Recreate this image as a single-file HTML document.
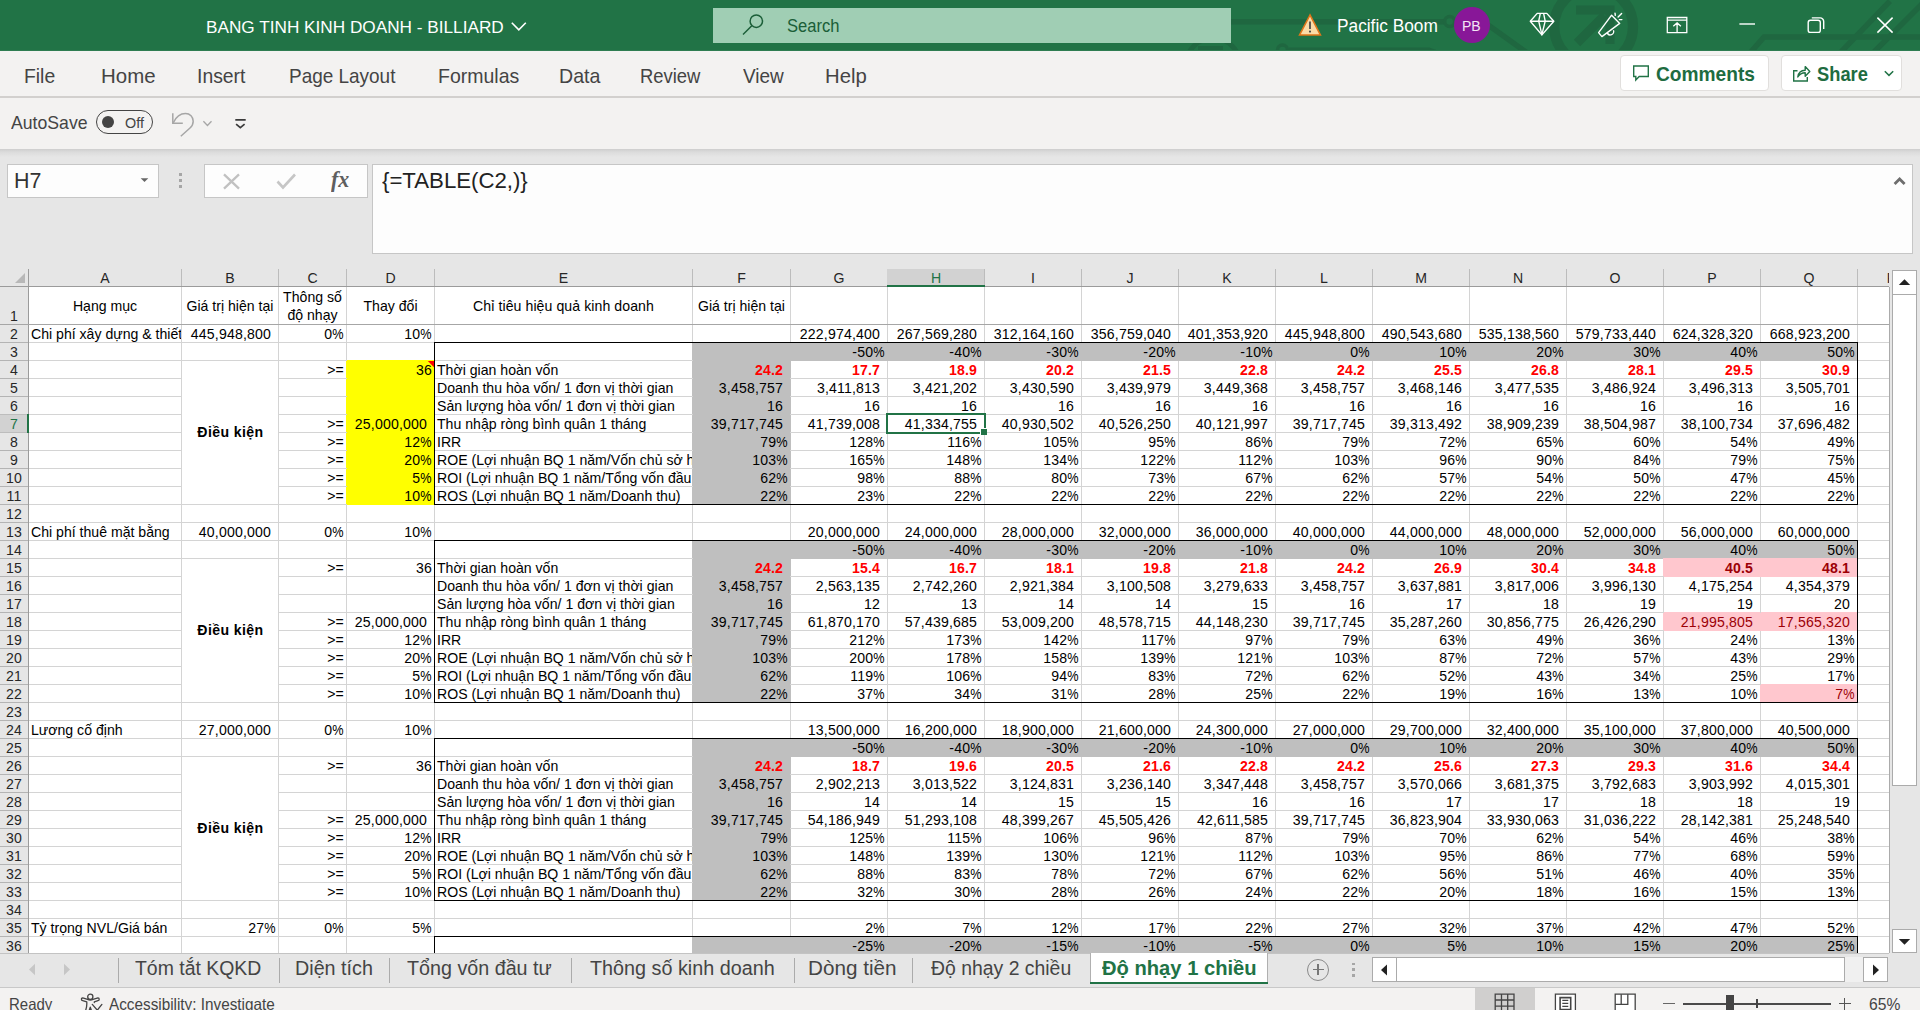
<!DOCTYPE html>
<html><head><meta charset="utf-8"><title>Excel</title>
<style>
*{box-sizing:border-box;margin:0;padding:0}
html,body{width:1920px;height:1010px;overflow:hidden;background:#e6e6e6;font-family:"Liberation Sans",sans-serif;}
#root{position:absolute;left:0;top:0;width:1920px;height:1010px;overflow:hidden;background:#e6e6e6}
.abs{position:absolute}
.t{position:absolute;white-space:nowrap;transform-origin:0 50%}
/* grid */
#grid{position:absolute;left:0;top:0;width:1889px;height:953px;overflow:hidden}
#sheet{position:absolute;left:29px;top:287px;width:1860px;height:666px;background:#fff}
.c{position:absolute;font-size:14.1px;color:#000;white-space:nowrap;overflow:hidden;}
.c.n{letter-spacing:.16px}
.c i{font-style:normal;display:inline-block;transform:scaleX(.9);transform-origin:100% 50%;margin-left:-1.2px;letter-spacing:0}
.c.b{font-weight:bold}
.c.rb{font-weight:bold;color:#ff0000}
.c.pk{color:#9c0006}
.ch{position:absolute;overflow:hidden;font-size:14.1px;color:#262626;text-align:center;background:#e6e6e6}
.ch.sel{background:#d2d2d2;color:#217346;}
.rh{position:absolute;overflow:hidden;letter-spacing:.16px;font-size:14.1px;color:#262626;text-align:center;background:#e6e6e6}
.rh.sel{background:#d2d2d2;color:#217346;}
</style></head><body><div id="root">
<div class="abs" style="left:0;top:0;width:1920px;height:50px;background:#217346;overflow:hidden">
<svg class="abs" style="left:0;top:0" width="1920" height="50" viewBox="0 0 1920 50" fill="none" stroke="#1f6740" stroke-width="5.500">
<circle cx="1593.600" cy="26.500" r="39.400" stroke-width="10.300"/>
<path d="M1576 9.900h34v34M1604.500 15.500L1577 43" stroke-width="9"/>
<path d="M1231 21.700h213M1455.500 24l34 2 42 30"/><circle cx="1449.700" cy="21.500" r="5" stroke-width="3.500"/>
<path d="M1289 49.500h140l14 5" stroke-width="4"/><circle cx="1282.500" cy="50" r="5" stroke-width="3.500"/>
<circle cx="1213" cy="65" r="27" stroke-width="5"/><path d="M1198 48.500h25" stroke-width="5"/>
<path d="M1744 60l20-23.100h160M1840 53l50-52M1870 56l56-56"/>
</svg>
<span class="t" style="left:206.08px;top:18.91px;font-size:17px;line-height:17px;color:#fff;transform:scaleX(1.0113);">BANG TINH KINH DOANH - BILLIARD</span>
<svg class="abs" style="left:510px;top:19.500px" width="18" height="12" viewBox="0 0 18 12" fill="none" stroke="#fff" stroke-width="1.600"><path d="M1.800 2.800l7 7 7-7"/></svg>
<div class="abs" style="left:713px;top:8px;width:518px;height:35px;background:#a0ceb4"></div>
<svg class="abs" style="left:741px;top:12px" width="26" height="26" viewBox="0 0 26 26" fill="none" stroke="#1b5e38" stroke-width="1.5"><circle cx="15.3" cy="9.2" r="6.2"/><path d="M10.8 13.8L2 22.5"/></svg>
<span class="t" style="left:786.75px;top:16.61px;font-size:18.3px;line-height:18.3px;color:#1b5e38;transform:scaleX(0.9072);">Search</span>
<svg class="abs" style="left:1297px;top:12px" width="26" height="25" viewBox="0 0 26 25"><path d="M13 3L2.6 23h20.8z" fill="#fbdba7" stroke="#e0761a" stroke-width="1.6" stroke-linejoin="miter"/><path d="M13 9.5v7.6" stroke="#444" stroke-width="1.7"/><circle cx="13" cy="19.6" r="1.05" fill="#444"/></svg>
<span class="t" style="left:1336.57px;top:17.26px;font-size:18px;line-height:18px;color:#fff;transform:scaleX(0.9602);">Pacific Boom</span>
<div class="abs" style="left:1454px;top:7px;width:36px;height:36px;border-radius:18px;background:#881798"></div>
<span class="t" style="left:1462.35px;top:18.73px;font-size:14.5px;line-height:14.5px;color:#f3e4f5;transform:scaleX(0.9655);">PB</span>
<svg class="abs" style="left:0;top:0" width="1920" height="50" viewBox="0 0 1920 50" fill="none" stroke="#fff" stroke-width="1.400" stroke-linejoin="round">
<path d="M1537.200 13.400h9.600l7 7.800-11.900 13.700-11.600-13.700z"/>
<path d="M1530.300 21.200h23.500M1540.300 13.400l-1.600 7.800 3.200 13.500 3.300-13.500-1.600-7.800"/>
<path d="M1611.600 15.200l8.100 8.200-17.800 13.200-3.300-4z"/>
<path d="M1607.200 32.900a3.100 3.100 0 0 0 6.200-2.700"/>
<path d="M1615 13.200l.3 2.200M1621.600 13.500l-3.500 3.500M1619.400 19.600h2.500" stroke-linecap="round"/>
<path d="M1667.300 17.500h19.500v15.200h-19.500zM1667.300 20.200h19.500M1677.100 32.500v-9.600M1673.300 26.300l3.800-3.400 3.800 3.400" stroke-width="1.300" stroke-linejoin="miter"/>
<path d="M1739.400 24h15.600" stroke-width="1.400"/>
<rect x="1808.200" y="20.200" width="12.100" height="12.200" rx="2.200"/>
<path d="M1811.800 17.900h8.400a3.500 3.500 0 0 1 3.500 3.500v7.600"/>
<path d="M1877.400 17.600l15.200 15M1892.600 17.600l-15.200 15" stroke-width="1.500"/>
</svg>
</div>
<div class="abs" style="left:0;top:50px;width:1920px;height:47px;background:#f3f2f1"></div>
<div class="abs" style="left:0;top:50px;width:1920px;height:1px;background:#2e7d52"></div>
<div class="abs" style="left:0;top:96px;width:1920px;height:1.500px;background:#d2d0ce"></div>
<span class="t" style="left:24.15px;top:65.53px;font-size:20.4px;line-height:20.4px;color:#444;transform:scaleX(0.9490);">File</span>
<span class="t" style="left:101.31px;top:65.53px;font-size:20.4px;line-height:20.4px;color:#444;transform:scaleX(1.0026);">Home</span>
<span class="t" style="left:197.21px;top:65.53px;font-size:20.4px;line-height:20.4px;color:#444;transform:scaleX(0.9498);">Insert</span>
<span class="t" style="left:289.19px;top:65.53px;font-size:20.4px;line-height:20.4px;color:#444;transform:scaleX(0.9294);">Page Layout</span>
<span class="t" style="left:438.39px;top:65.53px;font-size:20.4px;line-height:20.4px;color:#444;transform:scaleX(0.9562);">Formulas</span>
<span class="t" style="left:559.13px;top:65.53px;font-size:20.4px;line-height:20.4px;color:#444;transform:scaleX(0.9599);">Data</span>
<span class="t" style="left:640.48px;top:65.53px;font-size:20.4px;line-height:20.4px;color:#444;transform:scaleX(0.9038);">Review</span>
<span class="t" style="left:743.16px;top:65.53px;font-size:20.4px;line-height:20.4px;color:#444;transform:scaleX(0.9302);">View</span>
<span class="t" style="left:825.32px;top:65.53px;font-size:20.4px;line-height:20.4px;color:#444;transform:scaleX(0.9956);">Help</span>
<div class="abs" style="left:1620px;top:55px;width:149px;height:36px;background:#fff;border:1px solid #e1dfdd;border-radius:4px"></div>
<svg class="abs" style="left:1631px;top:63px" width="20" height="20" viewBox="0 0 20 20" fill="none" stroke="#217346" stroke-width="1.4" stroke-linejoin="miter"><path d="M2.700 3h14.600v10.500H8.200L4.800 17v-3.500H2.700z"/></svg>
<span class="t" style="left:1655.93px;top:64.75px;font-size:19.9px;line-height:19.9px;color:#1e6c41;font-weight:700;transform:scaleX(0.9630);">Comments</span>
<div class="abs" style="left:1781px;top:55px;width:121px;height:36px;background:#fff;border:1px solid #e1dfdd;border-radius:4px"></div>
<svg class="abs" style="left:1791px;top:63px" width="21" height="21" viewBox="0 0 21 21" fill="none" stroke="#217346" stroke-width="1.400"><path d="M6.500 7.700H2.700v10.300h13.600v-4"/><path d="M6.800 14c.6-4.300 3.200-6.600 7.400-6.700V3.600l4.600 4.800-4.600 4.800V9.700c-3.200 0-5.600 1.200-7.400 4.300z" stroke-linejoin="round"/></svg>
<span class="t" style="left:1816.95px;top:64.75px;font-size:19.9px;line-height:19.9px;color:#1e6c41;font-weight:700;transform:scaleX(0.9199);">Share</span>
<svg class="abs" style="left:1883px;top:69px" width="12" height="9" viewBox="0 0 12 9" fill="none" stroke="#217346" stroke-width="1.500"><path d="M1.800 2.200l4.200 4.200 4.200-4.200"/></svg>
<div class="abs" style="left:0;top:97.500px;width:1920px;height:51.500px;background:#f3f2f1"></div>
<div class="abs" style="left:0;top:149px;width:1920px;height:8px;background:linear-gradient(#cecece,#dcdcdc 40%,#e6e6e6)"></div>
<span class="t" style="left:11.21px;top:114.14px;font-size:18.2px;line-height:18.2px;color:#444;transform:scaleX(0.9702);">AutoSave</span>
<div class="abs" style="left:96px;top:110px;width:57px;height:24px;border:1.300px solid #444;border-radius:12px"></div>
<div class="abs" style="left:102.100px;top:116.100px;width:11.800px;height:11.800px;border-radius:6px;background:#444"></div>
<span class="t" style="left:124.82px;top:116.03px;font-size:14.5px;line-height:14.5px;color:#444;transform:scaleX(0.9910);">Off</span>
<svg class="abs" style="left:0;top:100px" width="260" height="45" viewBox="0 100 260 45" fill="none" stroke="#a6a6a6" stroke-width="1.500"><path d="M172.800 113.300V123.200H182.800"/><path d="M173.300 122.800C176 117 180.500 113.600 185.500 113.600C190 113.600 193.200 117 193.200 121.300C193.200 124 192 126.200 190 128L180.800 136.300"/><path d="M203.400 121.300l4.050 4.200 4.050-4.200" stroke-width="1.300"/><path d="M235.300 119.900h10.400M236.100 124.100l4.250 3.500 4.250-3.500" stroke="#3b3b3b" stroke-width="1.700"/></svg>
<div class="abs" style="left:7px;top:164px;width:152px;height:34px;background:#fdfdfd;border:1px solid #c6c6c6"></div>
<span class="t" style="left:13.73px;top:170.60px;font-size:21.5px;line-height:21.5px;color:#333;transform:scaleX(0.9952);">H7</span>
<svg class="abs" style="left:140px;top:177px" width="9" height="6" viewBox="0 0 9 6"><path d="M.7 1.200h7.600L4.500 5z" fill="#666"/></svg>
<div class="abs" style="left:179px;top:173.2px;width:3px;height:2.700px;background:#a6a6a6"></div>
<div class="abs" style="left:179px;top:179.3px;width:3px;height:2.700px;background:#a6a6a6"></div>
<div class="abs" style="left:179px;top:185.3px;width:3px;height:2.700px;background:#a6a6a6"></div>
<div class="abs" style="left:204px;top:164px;width:164px;height:34px;background:#fdfdfd;border:1px solid #c6c6c6"></div>
<svg class="abs" style="left:221px;top:172px" width="21" height="19" viewBox="0 0 21 19" fill="none" stroke="#c1c1c1" stroke-width="2.300"><path d="M3 2.300l15 14.400M18 2.300L3 16.700"/></svg>
<svg class="abs" style="left:275px;top:172px" width="23" height="19" viewBox="0 0 23 19" fill="none" stroke="#c6c6c6" stroke-width="2.600"><path d="M2.500 9.500l5.500 6L20 2.500"/></svg>
<span class="t" style="left:330.50px;top:168.12px;font-size:23.5px;line-height:23.5px;color:#5f5f5f;font-weight:700;font-family:'Liberation Serif',serif;font-style:italic;transform:scaleX(0.9354);">fx</span>
<div class="abs" style="left:372px;top:164px;width:1541px;height:90px;background:#fdfdfd;border:1px solid #c6c6c6"></div>
<span class="t" style="left:382.11px;top:171.04px;font-size:21.33px;line-height:21.33px;color:#222;transform:scaleX(1.0406);">{=TABLE(C2,)}</span>
<svg class="abs" style="left:1893px;top:176px" width="13" height="10" viewBox="0 0 13 10" fill="none" stroke="#6e6e6e" stroke-width="2.800"><path d="M1.600 8l5-5 5 5"/></svg>
<div id="grid">
<div id="sheet"></div>
<div style="position:absolute;left:692px;top:342px;width:99px;height:163px;background:#bfbfbf;"></div>
<div style="position:absolute;left:790px;top:342px;width:1068px;height:19px;background:#bfbfbf;"></div>
<div style="position:absolute;left:346px;top:360px;width:89px;height:145px;background:#ffff00;"></div>
<div style="position:absolute;left:692px;top:540px;width:99px;height:163px;background:#bfbfbf;"></div>
<div style="position:absolute;left:790px;top:540px;width:1068px;height:19px;background:#bfbfbf;"></div>
<div style="position:absolute;left:1663px;top:558px;width:98px;height:19px;background:#ffc7ce;"></div>
<div style="position:absolute;left:1760px;top:558px;width:98px;height:19px;background:#ffc7ce;"></div>
<div style="position:absolute;left:1663px;top:612px;width:98px;height:19px;background:#ffc7ce;"></div>
<div style="position:absolute;left:1760px;top:612px;width:98px;height:19px;background:#ffc7ce;"></div>
<div style="position:absolute;left:1760px;top:684px;width:98px;height:19px;background:#ffc7ce;"></div>
<div style="position:absolute;left:692px;top:738px;width:99px;height:163px;background:#bfbfbf;"></div>
<div style="position:absolute;left:790px;top:738px;width:1068px;height:19px;background:#bfbfbf;"></div>
<div style="position:absolute;left:692px;top:936px;width:99px;height:17px;background:#bfbfbf;"></div>
<div style="position:absolute;left:790px;top:936px;width:1068px;height:17px;background:#bfbfbf;"></div>
<div style="position:absolute;left:28px;top:342px;width:665px;height:1px;background:#d4d4d4"></div>
<div style="position:absolute;left:1857px;top:342px;width:32px;height:1px;background:#d4d4d4"></div>
<div style="position:absolute;left:28px;top:360px;width:319px;height:1px;background:#d4d4d4"></div>
<div style="position:absolute;left:434px;top:360px;width:259px;height:1px;background:#d4d4d4"></div>
<div style="position:absolute;left:1857px;top:360px;width:32px;height:1px;background:#d4d4d4"></div>
<div style="position:absolute;left:28px;top:378px;width:154px;height:1px;background:#d4d4d4"></div>
<div style="position:absolute;left:278px;top:378px;width:69px;height:1px;background:#d4d4d4"></div>
<div style="position:absolute;left:434px;top:378px;width:259px;height:1px;background:#d4d4d4"></div>
<div style="position:absolute;left:790px;top:378px;width:1099px;height:1px;background:#d4d4d4"></div>
<div style="position:absolute;left:28px;top:396px;width:154px;height:1px;background:#d4d4d4"></div>
<div style="position:absolute;left:278px;top:396px;width:69px;height:1px;background:#d4d4d4"></div>
<div style="position:absolute;left:434px;top:396px;width:259px;height:1px;background:#d4d4d4"></div>
<div style="position:absolute;left:790px;top:396px;width:1099px;height:1px;background:#d4d4d4"></div>
<div style="position:absolute;left:28px;top:414px;width:154px;height:1px;background:#d4d4d4"></div>
<div style="position:absolute;left:278px;top:414px;width:69px;height:1px;background:#d4d4d4"></div>
<div style="position:absolute;left:434px;top:414px;width:259px;height:1px;background:#d4d4d4"></div>
<div style="position:absolute;left:790px;top:414px;width:1099px;height:1px;background:#d4d4d4"></div>
<div style="position:absolute;left:28px;top:432px;width:154px;height:1px;background:#d4d4d4"></div>
<div style="position:absolute;left:278px;top:432px;width:69px;height:1px;background:#d4d4d4"></div>
<div style="position:absolute;left:434px;top:432px;width:259px;height:1px;background:#d4d4d4"></div>
<div style="position:absolute;left:790px;top:432px;width:1099px;height:1px;background:#d4d4d4"></div>
<div style="position:absolute;left:28px;top:450px;width:154px;height:1px;background:#d4d4d4"></div>
<div style="position:absolute;left:278px;top:450px;width:69px;height:1px;background:#d4d4d4"></div>
<div style="position:absolute;left:434px;top:450px;width:259px;height:1px;background:#d4d4d4"></div>
<div style="position:absolute;left:790px;top:450px;width:1099px;height:1px;background:#d4d4d4"></div>
<div style="position:absolute;left:28px;top:468px;width:154px;height:1px;background:#d4d4d4"></div>
<div style="position:absolute;left:278px;top:468px;width:69px;height:1px;background:#d4d4d4"></div>
<div style="position:absolute;left:434px;top:468px;width:259px;height:1px;background:#d4d4d4"></div>
<div style="position:absolute;left:790px;top:468px;width:1099px;height:1px;background:#d4d4d4"></div>
<div style="position:absolute;left:28px;top:486px;width:154px;height:1px;background:#d4d4d4"></div>
<div style="position:absolute;left:278px;top:486px;width:69px;height:1px;background:#d4d4d4"></div>
<div style="position:absolute;left:434px;top:486px;width:259px;height:1px;background:#d4d4d4"></div>
<div style="position:absolute;left:790px;top:486px;width:1099px;height:1px;background:#d4d4d4"></div>
<div style="position:absolute;left:28px;top:504px;width:319px;height:1px;background:#d4d4d4"></div>
<div style="position:absolute;left:434px;top:504px;width:259px;height:1px;background:#d4d4d4"></div>
<div style="position:absolute;left:790px;top:504px;width:1099px;height:1px;background:#d4d4d4"></div>
<div style="position:absolute;left:28px;top:522px;width:1861px;height:1px;background:#d4d4d4"></div>
<div style="position:absolute;left:28px;top:540px;width:665px;height:1px;background:#d4d4d4"></div>
<div style="position:absolute;left:1857px;top:540px;width:32px;height:1px;background:#d4d4d4"></div>
<div style="position:absolute;left:28px;top:558px;width:665px;height:1px;background:#d4d4d4"></div>
<div style="position:absolute;left:1857px;top:558px;width:32px;height:1px;background:#d4d4d4"></div>
<div style="position:absolute;left:28px;top:576px;width:154px;height:1px;background:#d4d4d4"></div>
<div style="position:absolute;left:278px;top:576px;width:415px;height:1px;background:#d4d4d4"></div>
<div style="position:absolute;left:790px;top:576px;width:874px;height:1px;background:#d4d4d4"></div>
<div style="position:absolute;left:1857px;top:576px;width:32px;height:1px;background:#d4d4d4"></div>
<div style="position:absolute;left:28px;top:594px;width:154px;height:1px;background:#d4d4d4"></div>
<div style="position:absolute;left:278px;top:594px;width:415px;height:1px;background:#d4d4d4"></div>
<div style="position:absolute;left:790px;top:594px;width:1099px;height:1px;background:#d4d4d4"></div>
<div style="position:absolute;left:28px;top:612px;width:154px;height:1px;background:#d4d4d4"></div>
<div style="position:absolute;left:278px;top:612px;width:415px;height:1px;background:#d4d4d4"></div>
<div style="position:absolute;left:790px;top:612px;width:874px;height:1px;background:#d4d4d4"></div>
<div style="position:absolute;left:1857px;top:612px;width:32px;height:1px;background:#d4d4d4"></div>
<div style="position:absolute;left:28px;top:630px;width:154px;height:1px;background:#d4d4d4"></div>
<div style="position:absolute;left:278px;top:630px;width:415px;height:1px;background:#d4d4d4"></div>
<div style="position:absolute;left:790px;top:630px;width:874px;height:1px;background:#d4d4d4"></div>
<div style="position:absolute;left:1857px;top:630px;width:32px;height:1px;background:#d4d4d4"></div>
<div style="position:absolute;left:28px;top:648px;width:154px;height:1px;background:#d4d4d4"></div>
<div style="position:absolute;left:278px;top:648px;width:415px;height:1px;background:#d4d4d4"></div>
<div style="position:absolute;left:790px;top:648px;width:1099px;height:1px;background:#d4d4d4"></div>
<div style="position:absolute;left:28px;top:666px;width:154px;height:1px;background:#d4d4d4"></div>
<div style="position:absolute;left:278px;top:666px;width:415px;height:1px;background:#d4d4d4"></div>
<div style="position:absolute;left:790px;top:666px;width:1099px;height:1px;background:#d4d4d4"></div>
<div style="position:absolute;left:28px;top:684px;width:154px;height:1px;background:#d4d4d4"></div>
<div style="position:absolute;left:278px;top:684px;width:415px;height:1px;background:#d4d4d4"></div>
<div style="position:absolute;left:790px;top:684px;width:971px;height:1px;background:#d4d4d4"></div>
<div style="position:absolute;left:1857px;top:684px;width:32px;height:1px;background:#d4d4d4"></div>
<div style="position:absolute;left:28px;top:702px;width:665px;height:1px;background:#d4d4d4"></div>
<div style="position:absolute;left:790px;top:702px;width:971px;height:1px;background:#d4d4d4"></div>
<div style="position:absolute;left:1857px;top:702px;width:32px;height:1px;background:#d4d4d4"></div>
<div style="position:absolute;left:28px;top:720px;width:1861px;height:1px;background:#d4d4d4"></div>
<div style="position:absolute;left:28px;top:738px;width:665px;height:1px;background:#d4d4d4"></div>
<div style="position:absolute;left:1857px;top:738px;width:32px;height:1px;background:#d4d4d4"></div>
<div style="position:absolute;left:28px;top:756px;width:665px;height:1px;background:#d4d4d4"></div>
<div style="position:absolute;left:1857px;top:756px;width:32px;height:1px;background:#d4d4d4"></div>
<div style="position:absolute;left:28px;top:774px;width:154px;height:1px;background:#d4d4d4"></div>
<div style="position:absolute;left:278px;top:774px;width:415px;height:1px;background:#d4d4d4"></div>
<div style="position:absolute;left:790px;top:774px;width:1099px;height:1px;background:#d4d4d4"></div>
<div style="position:absolute;left:28px;top:792px;width:154px;height:1px;background:#d4d4d4"></div>
<div style="position:absolute;left:278px;top:792px;width:415px;height:1px;background:#d4d4d4"></div>
<div style="position:absolute;left:790px;top:792px;width:1099px;height:1px;background:#d4d4d4"></div>
<div style="position:absolute;left:28px;top:810px;width:154px;height:1px;background:#d4d4d4"></div>
<div style="position:absolute;left:278px;top:810px;width:415px;height:1px;background:#d4d4d4"></div>
<div style="position:absolute;left:790px;top:810px;width:1099px;height:1px;background:#d4d4d4"></div>
<div style="position:absolute;left:28px;top:828px;width:154px;height:1px;background:#d4d4d4"></div>
<div style="position:absolute;left:278px;top:828px;width:415px;height:1px;background:#d4d4d4"></div>
<div style="position:absolute;left:790px;top:828px;width:1099px;height:1px;background:#d4d4d4"></div>
<div style="position:absolute;left:28px;top:846px;width:154px;height:1px;background:#d4d4d4"></div>
<div style="position:absolute;left:278px;top:846px;width:415px;height:1px;background:#d4d4d4"></div>
<div style="position:absolute;left:790px;top:846px;width:1099px;height:1px;background:#d4d4d4"></div>
<div style="position:absolute;left:28px;top:864px;width:154px;height:1px;background:#d4d4d4"></div>
<div style="position:absolute;left:278px;top:864px;width:415px;height:1px;background:#d4d4d4"></div>
<div style="position:absolute;left:790px;top:864px;width:1099px;height:1px;background:#d4d4d4"></div>
<div style="position:absolute;left:28px;top:882px;width:154px;height:1px;background:#d4d4d4"></div>
<div style="position:absolute;left:278px;top:882px;width:415px;height:1px;background:#d4d4d4"></div>
<div style="position:absolute;left:790px;top:882px;width:1099px;height:1px;background:#d4d4d4"></div>
<div style="position:absolute;left:28px;top:900px;width:665px;height:1px;background:#d4d4d4"></div>
<div style="position:absolute;left:790px;top:900px;width:1099px;height:1px;background:#d4d4d4"></div>
<div style="position:absolute;left:28px;top:918px;width:1861px;height:1px;background:#d4d4d4"></div>
<div style="position:absolute;left:28px;top:936px;width:665px;height:1px;background:#d4d4d4"></div>
<div style="position:absolute;left:1857px;top:936px;width:32px;height:1px;background:#d4d4d4"></div>
<div style="position:absolute;left:181px;top:287px;width:1px;height:37px;background:#d4d4d4"></div>
<div style="position:absolute;left:181px;top:325px;width:1px;height:18px;background:#d4d4d4"></div>
<div style="position:absolute;left:181px;top:343px;width:1px;height:18px;background:#d4d4d4"></div>
<div style="position:absolute;left:181px;top:361px;width:1px;height:18px;background:#d4d4d4"></div>
<div style="position:absolute;left:181px;top:379px;width:1px;height:18px;background:#d4d4d4"></div>
<div style="position:absolute;left:181px;top:397px;width:1px;height:18px;background:#d4d4d4"></div>
<div style="position:absolute;left:181px;top:415px;width:1px;height:18px;background:#d4d4d4"></div>
<div style="position:absolute;left:181px;top:433px;width:1px;height:18px;background:#d4d4d4"></div>
<div style="position:absolute;left:181px;top:451px;width:1px;height:18px;background:#d4d4d4"></div>
<div style="position:absolute;left:181px;top:469px;width:1px;height:18px;background:#d4d4d4"></div>
<div style="position:absolute;left:181px;top:487px;width:1px;height:18px;background:#d4d4d4"></div>
<div style="position:absolute;left:181px;top:505px;width:1px;height:18px;background:#d4d4d4"></div>
<div style="position:absolute;left:181px;top:523px;width:1px;height:18px;background:#d4d4d4"></div>
<div style="position:absolute;left:181px;top:541px;width:1px;height:18px;background:#d4d4d4"></div>
<div style="position:absolute;left:181px;top:559px;width:1px;height:18px;background:#d4d4d4"></div>
<div style="position:absolute;left:181px;top:577px;width:1px;height:18px;background:#d4d4d4"></div>
<div style="position:absolute;left:181px;top:595px;width:1px;height:18px;background:#d4d4d4"></div>
<div style="position:absolute;left:181px;top:613px;width:1px;height:18px;background:#d4d4d4"></div>
<div style="position:absolute;left:181px;top:631px;width:1px;height:18px;background:#d4d4d4"></div>
<div style="position:absolute;left:181px;top:649px;width:1px;height:18px;background:#d4d4d4"></div>
<div style="position:absolute;left:181px;top:667px;width:1px;height:18px;background:#d4d4d4"></div>
<div style="position:absolute;left:181px;top:685px;width:1px;height:18px;background:#d4d4d4"></div>
<div style="position:absolute;left:181px;top:703px;width:1px;height:18px;background:#d4d4d4"></div>
<div style="position:absolute;left:181px;top:721px;width:1px;height:18px;background:#d4d4d4"></div>
<div style="position:absolute;left:181px;top:739px;width:1px;height:18px;background:#d4d4d4"></div>
<div style="position:absolute;left:181px;top:757px;width:1px;height:18px;background:#d4d4d4"></div>
<div style="position:absolute;left:181px;top:775px;width:1px;height:18px;background:#d4d4d4"></div>
<div style="position:absolute;left:181px;top:793px;width:1px;height:18px;background:#d4d4d4"></div>
<div style="position:absolute;left:181px;top:811px;width:1px;height:18px;background:#d4d4d4"></div>
<div style="position:absolute;left:181px;top:829px;width:1px;height:18px;background:#d4d4d4"></div>
<div style="position:absolute;left:181px;top:847px;width:1px;height:18px;background:#d4d4d4"></div>
<div style="position:absolute;left:181px;top:865px;width:1px;height:18px;background:#d4d4d4"></div>
<div style="position:absolute;left:181px;top:883px;width:1px;height:18px;background:#d4d4d4"></div>
<div style="position:absolute;left:181px;top:901px;width:1px;height:18px;background:#d4d4d4"></div>
<div style="position:absolute;left:181px;top:919px;width:1px;height:18px;background:#d4d4d4"></div>
<div style="position:absolute;left:181px;top:937px;width:1px;height:16px;background:#d4d4d4"></div>
<div style="position:absolute;left:278px;top:287px;width:1px;height:37px;background:#d4d4d4"></div>
<div style="position:absolute;left:278px;top:325px;width:1px;height:18px;background:#d4d4d4"></div>
<div style="position:absolute;left:278px;top:343px;width:1px;height:18px;background:#d4d4d4"></div>
<div style="position:absolute;left:278px;top:361px;width:1px;height:18px;background:#d4d4d4"></div>
<div style="position:absolute;left:278px;top:379px;width:1px;height:18px;background:#d4d4d4"></div>
<div style="position:absolute;left:278px;top:397px;width:1px;height:18px;background:#d4d4d4"></div>
<div style="position:absolute;left:278px;top:415px;width:1px;height:18px;background:#d4d4d4"></div>
<div style="position:absolute;left:278px;top:433px;width:1px;height:18px;background:#d4d4d4"></div>
<div style="position:absolute;left:278px;top:451px;width:1px;height:18px;background:#d4d4d4"></div>
<div style="position:absolute;left:278px;top:469px;width:1px;height:18px;background:#d4d4d4"></div>
<div style="position:absolute;left:278px;top:487px;width:1px;height:18px;background:#d4d4d4"></div>
<div style="position:absolute;left:278px;top:505px;width:1px;height:18px;background:#d4d4d4"></div>
<div style="position:absolute;left:278px;top:523px;width:1px;height:18px;background:#d4d4d4"></div>
<div style="position:absolute;left:278px;top:541px;width:1px;height:18px;background:#d4d4d4"></div>
<div style="position:absolute;left:278px;top:559px;width:1px;height:18px;background:#d4d4d4"></div>
<div style="position:absolute;left:278px;top:577px;width:1px;height:18px;background:#d4d4d4"></div>
<div style="position:absolute;left:278px;top:595px;width:1px;height:18px;background:#d4d4d4"></div>
<div style="position:absolute;left:278px;top:613px;width:1px;height:18px;background:#d4d4d4"></div>
<div style="position:absolute;left:278px;top:631px;width:1px;height:18px;background:#d4d4d4"></div>
<div style="position:absolute;left:278px;top:649px;width:1px;height:18px;background:#d4d4d4"></div>
<div style="position:absolute;left:278px;top:667px;width:1px;height:18px;background:#d4d4d4"></div>
<div style="position:absolute;left:278px;top:685px;width:1px;height:18px;background:#d4d4d4"></div>
<div style="position:absolute;left:278px;top:703px;width:1px;height:18px;background:#d4d4d4"></div>
<div style="position:absolute;left:278px;top:721px;width:1px;height:18px;background:#d4d4d4"></div>
<div style="position:absolute;left:278px;top:739px;width:1px;height:18px;background:#d4d4d4"></div>
<div style="position:absolute;left:278px;top:757px;width:1px;height:18px;background:#d4d4d4"></div>
<div style="position:absolute;left:278px;top:775px;width:1px;height:18px;background:#d4d4d4"></div>
<div style="position:absolute;left:278px;top:793px;width:1px;height:18px;background:#d4d4d4"></div>
<div style="position:absolute;left:278px;top:811px;width:1px;height:18px;background:#d4d4d4"></div>
<div style="position:absolute;left:278px;top:829px;width:1px;height:18px;background:#d4d4d4"></div>
<div style="position:absolute;left:278px;top:847px;width:1px;height:18px;background:#d4d4d4"></div>
<div style="position:absolute;left:278px;top:865px;width:1px;height:18px;background:#d4d4d4"></div>
<div style="position:absolute;left:278px;top:883px;width:1px;height:18px;background:#d4d4d4"></div>
<div style="position:absolute;left:278px;top:901px;width:1px;height:18px;background:#d4d4d4"></div>
<div style="position:absolute;left:278px;top:919px;width:1px;height:18px;background:#d4d4d4"></div>
<div style="position:absolute;left:278px;top:937px;width:1px;height:16px;background:#d4d4d4"></div>
<div style="position:absolute;left:346px;top:287px;width:1px;height:37px;background:#d4d4d4"></div>
<div style="position:absolute;left:346px;top:325px;width:1px;height:18px;background:#d4d4d4"></div>
<div style="position:absolute;left:346px;top:343px;width:1px;height:18px;background:#d4d4d4"></div>
<div style="position:absolute;left:346px;top:505px;width:1px;height:18px;background:#d4d4d4"></div>
<div style="position:absolute;left:346px;top:523px;width:1px;height:18px;background:#d4d4d4"></div>
<div style="position:absolute;left:346px;top:541px;width:1px;height:18px;background:#d4d4d4"></div>
<div style="position:absolute;left:346px;top:559px;width:1px;height:18px;background:#d4d4d4"></div>
<div style="position:absolute;left:346px;top:577px;width:1px;height:18px;background:#d4d4d4"></div>
<div style="position:absolute;left:346px;top:595px;width:1px;height:18px;background:#d4d4d4"></div>
<div style="position:absolute;left:346px;top:613px;width:1px;height:18px;background:#d4d4d4"></div>
<div style="position:absolute;left:346px;top:631px;width:1px;height:18px;background:#d4d4d4"></div>
<div style="position:absolute;left:346px;top:649px;width:1px;height:18px;background:#d4d4d4"></div>
<div style="position:absolute;left:346px;top:667px;width:1px;height:18px;background:#d4d4d4"></div>
<div style="position:absolute;left:346px;top:685px;width:1px;height:18px;background:#d4d4d4"></div>
<div style="position:absolute;left:346px;top:703px;width:1px;height:18px;background:#d4d4d4"></div>
<div style="position:absolute;left:346px;top:721px;width:1px;height:18px;background:#d4d4d4"></div>
<div style="position:absolute;left:346px;top:739px;width:1px;height:18px;background:#d4d4d4"></div>
<div style="position:absolute;left:346px;top:757px;width:1px;height:18px;background:#d4d4d4"></div>
<div style="position:absolute;left:346px;top:775px;width:1px;height:18px;background:#d4d4d4"></div>
<div style="position:absolute;left:346px;top:793px;width:1px;height:18px;background:#d4d4d4"></div>
<div style="position:absolute;left:346px;top:811px;width:1px;height:18px;background:#d4d4d4"></div>
<div style="position:absolute;left:346px;top:829px;width:1px;height:18px;background:#d4d4d4"></div>
<div style="position:absolute;left:346px;top:847px;width:1px;height:18px;background:#d4d4d4"></div>
<div style="position:absolute;left:346px;top:865px;width:1px;height:18px;background:#d4d4d4"></div>
<div style="position:absolute;left:346px;top:883px;width:1px;height:18px;background:#d4d4d4"></div>
<div style="position:absolute;left:346px;top:901px;width:1px;height:18px;background:#d4d4d4"></div>
<div style="position:absolute;left:346px;top:919px;width:1px;height:18px;background:#d4d4d4"></div>
<div style="position:absolute;left:346px;top:937px;width:1px;height:16px;background:#d4d4d4"></div>
<div style="position:absolute;left:434px;top:287px;width:1px;height:37px;background:#d4d4d4"></div>
<div style="position:absolute;left:434px;top:325px;width:1px;height:18px;background:#d4d4d4"></div>
<div style="position:absolute;left:434px;top:343px;width:1px;height:18px;background:#d4d4d4"></div>
<div style="position:absolute;left:434px;top:505px;width:1px;height:18px;background:#d4d4d4"></div>
<div style="position:absolute;left:434px;top:523px;width:1px;height:18px;background:#d4d4d4"></div>
<div style="position:absolute;left:434px;top:541px;width:1px;height:18px;background:#d4d4d4"></div>
<div style="position:absolute;left:434px;top:559px;width:1px;height:18px;background:#d4d4d4"></div>
<div style="position:absolute;left:434px;top:577px;width:1px;height:18px;background:#d4d4d4"></div>
<div style="position:absolute;left:434px;top:595px;width:1px;height:18px;background:#d4d4d4"></div>
<div style="position:absolute;left:434px;top:613px;width:1px;height:18px;background:#d4d4d4"></div>
<div style="position:absolute;left:434px;top:631px;width:1px;height:18px;background:#d4d4d4"></div>
<div style="position:absolute;left:434px;top:649px;width:1px;height:18px;background:#d4d4d4"></div>
<div style="position:absolute;left:434px;top:667px;width:1px;height:18px;background:#d4d4d4"></div>
<div style="position:absolute;left:434px;top:685px;width:1px;height:18px;background:#d4d4d4"></div>
<div style="position:absolute;left:434px;top:703px;width:1px;height:18px;background:#d4d4d4"></div>
<div style="position:absolute;left:434px;top:721px;width:1px;height:18px;background:#d4d4d4"></div>
<div style="position:absolute;left:434px;top:739px;width:1px;height:18px;background:#d4d4d4"></div>
<div style="position:absolute;left:434px;top:757px;width:1px;height:18px;background:#d4d4d4"></div>
<div style="position:absolute;left:434px;top:775px;width:1px;height:18px;background:#d4d4d4"></div>
<div style="position:absolute;left:434px;top:793px;width:1px;height:18px;background:#d4d4d4"></div>
<div style="position:absolute;left:434px;top:811px;width:1px;height:18px;background:#d4d4d4"></div>
<div style="position:absolute;left:434px;top:829px;width:1px;height:18px;background:#d4d4d4"></div>
<div style="position:absolute;left:434px;top:847px;width:1px;height:18px;background:#d4d4d4"></div>
<div style="position:absolute;left:434px;top:865px;width:1px;height:18px;background:#d4d4d4"></div>
<div style="position:absolute;left:434px;top:883px;width:1px;height:18px;background:#d4d4d4"></div>
<div style="position:absolute;left:434px;top:901px;width:1px;height:18px;background:#d4d4d4"></div>
<div style="position:absolute;left:434px;top:919px;width:1px;height:18px;background:#d4d4d4"></div>
<div style="position:absolute;left:434px;top:937px;width:1px;height:16px;background:#d4d4d4"></div>
<div style="position:absolute;left:692px;top:287px;width:1px;height:37px;background:#d4d4d4"></div>
<div style="position:absolute;left:692px;top:325px;width:1px;height:18px;background:#d4d4d4"></div>
<div style="position:absolute;left:692px;top:505px;width:1px;height:18px;background:#d4d4d4"></div>
<div style="position:absolute;left:692px;top:523px;width:1px;height:18px;background:#d4d4d4"></div>
<div style="position:absolute;left:692px;top:703px;width:1px;height:18px;background:#d4d4d4"></div>
<div style="position:absolute;left:692px;top:721px;width:1px;height:18px;background:#d4d4d4"></div>
<div style="position:absolute;left:692px;top:901px;width:1px;height:18px;background:#d4d4d4"></div>
<div style="position:absolute;left:692px;top:919px;width:1px;height:18px;background:#d4d4d4"></div>
<div style="position:absolute;left:790px;top:287px;width:1px;height:37px;background:#d4d4d4"></div>
<div style="position:absolute;left:790px;top:325px;width:1px;height:18px;background:#d4d4d4"></div>
<div style="position:absolute;left:790px;top:505px;width:1px;height:18px;background:#d4d4d4"></div>
<div style="position:absolute;left:790px;top:523px;width:1px;height:18px;background:#d4d4d4"></div>
<div style="position:absolute;left:790px;top:703px;width:1px;height:18px;background:#d4d4d4"></div>
<div style="position:absolute;left:790px;top:721px;width:1px;height:18px;background:#d4d4d4"></div>
<div style="position:absolute;left:790px;top:901px;width:1px;height:18px;background:#d4d4d4"></div>
<div style="position:absolute;left:790px;top:919px;width:1px;height:18px;background:#d4d4d4"></div>
<div style="position:absolute;left:887px;top:287px;width:1px;height:37px;background:#d4d4d4"></div>
<div style="position:absolute;left:887px;top:325px;width:1px;height:18px;background:#d4d4d4"></div>
<div style="position:absolute;left:887px;top:361px;width:1px;height:18px;background:#d4d4d4"></div>
<div style="position:absolute;left:887px;top:379px;width:1px;height:18px;background:#d4d4d4"></div>
<div style="position:absolute;left:887px;top:397px;width:1px;height:18px;background:#d4d4d4"></div>
<div style="position:absolute;left:887px;top:415px;width:1px;height:18px;background:#d4d4d4"></div>
<div style="position:absolute;left:887px;top:433px;width:1px;height:18px;background:#d4d4d4"></div>
<div style="position:absolute;left:887px;top:451px;width:1px;height:18px;background:#d4d4d4"></div>
<div style="position:absolute;left:887px;top:469px;width:1px;height:18px;background:#d4d4d4"></div>
<div style="position:absolute;left:887px;top:487px;width:1px;height:18px;background:#d4d4d4"></div>
<div style="position:absolute;left:887px;top:505px;width:1px;height:18px;background:#d4d4d4"></div>
<div style="position:absolute;left:887px;top:523px;width:1px;height:18px;background:#d4d4d4"></div>
<div style="position:absolute;left:887px;top:559px;width:1px;height:18px;background:#d4d4d4"></div>
<div style="position:absolute;left:887px;top:577px;width:1px;height:18px;background:#d4d4d4"></div>
<div style="position:absolute;left:887px;top:595px;width:1px;height:18px;background:#d4d4d4"></div>
<div style="position:absolute;left:887px;top:613px;width:1px;height:18px;background:#d4d4d4"></div>
<div style="position:absolute;left:887px;top:631px;width:1px;height:18px;background:#d4d4d4"></div>
<div style="position:absolute;left:887px;top:649px;width:1px;height:18px;background:#d4d4d4"></div>
<div style="position:absolute;left:887px;top:667px;width:1px;height:18px;background:#d4d4d4"></div>
<div style="position:absolute;left:887px;top:685px;width:1px;height:18px;background:#d4d4d4"></div>
<div style="position:absolute;left:887px;top:703px;width:1px;height:18px;background:#d4d4d4"></div>
<div style="position:absolute;left:887px;top:721px;width:1px;height:18px;background:#d4d4d4"></div>
<div style="position:absolute;left:887px;top:757px;width:1px;height:18px;background:#d4d4d4"></div>
<div style="position:absolute;left:887px;top:775px;width:1px;height:18px;background:#d4d4d4"></div>
<div style="position:absolute;left:887px;top:793px;width:1px;height:18px;background:#d4d4d4"></div>
<div style="position:absolute;left:887px;top:811px;width:1px;height:18px;background:#d4d4d4"></div>
<div style="position:absolute;left:887px;top:829px;width:1px;height:18px;background:#d4d4d4"></div>
<div style="position:absolute;left:887px;top:847px;width:1px;height:18px;background:#d4d4d4"></div>
<div style="position:absolute;left:887px;top:865px;width:1px;height:18px;background:#d4d4d4"></div>
<div style="position:absolute;left:887px;top:883px;width:1px;height:18px;background:#d4d4d4"></div>
<div style="position:absolute;left:887px;top:901px;width:1px;height:18px;background:#d4d4d4"></div>
<div style="position:absolute;left:887px;top:919px;width:1px;height:18px;background:#d4d4d4"></div>
<div style="position:absolute;left:984px;top:287px;width:1px;height:37px;background:#d4d4d4"></div>
<div style="position:absolute;left:984px;top:325px;width:1px;height:18px;background:#d4d4d4"></div>
<div style="position:absolute;left:984px;top:361px;width:1px;height:18px;background:#d4d4d4"></div>
<div style="position:absolute;left:984px;top:379px;width:1px;height:18px;background:#d4d4d4"></div>
<div style="position:absolute;left:984px;top:397px;width:1px;height:18px;background:#d4d4d4"></div>
<div style="position:absolute;left:984px;top:415px;width:1px;height:18px;background:#d4d4d4"></div>
<div style="position:absolute;left:984px;top:433px;width:1px;height:18px;background:#d4d4d4"></div>
<div style="position:absolute;left:984px;top:451px;width:1px;height:18px;background:#d4d4d4"></div>
<div style="position:absolute;left:984px;top:469px;width:1px;height:18px;background:#d4d4d4"></div>
<div style="position:absolute;left:984px;top:487px;width:1px;height:18px;background:#d4d4d4"></div>
<div style="position:absolute;left:984px;top:505px;width:1px;height:18px;background:#d4d4d4"></div>
<div style="position:absolute;left:984px;top:523px;width:1px;height:18px;background:#d4d4d4"></div>
<div style="position:absolute;left:984px;top:559px;width:1px;height:18px;background:#d4d4d4"></div>
<div style="position:absolute;left:984px;top:577px;width:1px;height:18px;background:#d4d4d4"></div>
<div style="position:absolute;left:984px;top:595px;width:1px;height:18px;background:#d4d4d4"></div>
<div style="position:absolute;left:984px;top:613px;width:1px;height:18px;background:#d4d4d4"></div>
<div style="position:absolute;left:984px;top:631px;width:1px;height:18px;background:#d4d4d4"></div>
<div style="position:absolute;left:984px;top:649px;width:1px;height:18px;background:#d4d4d4"></div>
<div style="position:absolute;left:984px;top:667px;width:1px;height:18px;background:#d4d4d4"></div>
<div style="position:absolute;left:984px;top:685px;width:1px;height:18px;background:#d4d4d4"></div>
<div style="position:absolute;left:984px;top:703px;width:1px;height:18px;background:#d4d4d4"></div>
<div style="position:absolute;left:984px;top:721px;width:1px;height:18px;background:#d4d4d4"></div>
<div style="position:absolute;left:984px;top:757px;width:1px;height:18px;background:#d4d4d4"></div>
<div style="position:absolute;left:984px;top:775px;width:1px;height:18px;background:#d4d4d4"></div>
<div style="position:absolute;left:984px;top:793px;width:1px;height:18px;background:#d4d4d4"></div>
<div style="position:absolute;left:984px;top:811px;width:1px;height:18px;background:#d4d4d4"></div>
<div style="position:absolute;left:984px;top:829px;width:1px;height:18px;background:#d4d4d4"></div>
<div style="position:absolute;left:984px;top:847px;width:1px;height:18px;background:#d4d4d4"></div>
<div style="position:absolute;left:984px;top:865px;width:1px;height:18px;background:#d4d4d4"></div>
<div style="position:absolute;left:984px;top:883px;width:1px;height:18px;background:#d4d4d4"></div>
<div style="position:absolute;left:984px;top:901px;width:1px;height:18px;background:#d4d4d4"></div>
<div style="position:absolute;left:984px;top:919px;width:1px;height:18px;background:#d4d4d4"></div>
<div style="position:absolute;left:1081px;top:287px;width:1px;height:37px;background:#d4d4d4"></div>
<div style="position:absolute;left:1081px;top:325px;width:1px;height:18px;background:#d4d4d4"></div>
<div style="position:absolute;left:1081px;top:361px;width:1px;height:18px;background:#d4d4d4"></div>
<div style="position:absolute;left:1081px;top:379px;width:1px;height:18px;background:#d4d4d4"></div>
<div style="position:absolute;left:1081px;top:397px;width:1px;height:18px;background:#d4d4d4"></div>
<div style="position:absolute;left:1081px;top:415px;width:1px;height:18px;background:#d4d4d4"></div>
<div style="position:absolute;left:1081px;top:433px;width:1px;height:18px;background:#d4d4d4"></div>
<div style="position:absolute;left:1081px;top:451px;width:1px;height:18px;background:#d4d4d4"></div>
<div style="position:absolute;left:1081px;top:469px;width:1px;height:18px;background:#d4d4d4"></div>
<div style="position:absolute;left:1081px;top:487px;width:1px;height:18px;background:#d4d4d4"></div>
<div style="position:absolute;left:1081px;top:505px;width:1px;height:18px;background:#d4d4d4"></div>
<div style="position:absolute;left:1081px;top:523px;width:1px;height:18px;background:#d4d4d4"></div>
<div style="position:absolute;left:1081px;top:559px;width:1px;height:18px;background:#d4d4d4"></div>
<div style="position:absolute;left:1081px;top:577px;width:1px;height:18px;background:#d4d4d4"></div>
<div style="position:absolute;left:1081px;top:595px;width:1px;height:18px;background:#d4d4d4"></div>
<div style="position:absolute;left:1081px;top:613px;width:1px;height:18px;background:#d4d4d4"></div>
<div style="position:absolute;left:1081px;top:631px;width:1px;height:18px;background:#d4d4d4"></div>
<div style="position:absolute;left:1081px;top:649px;width:1px;height:18px;background:#d4d4d4"></div>
<div style="position:absolute;left:1081px;top:667px;width:1px;height:18px;background:#d4d4d4"></div>
<div style="position:absolute;left:1081px;top:685px;width:1px;height:18px;background:#d4d4d4"></div>
<div style="position:absolute;left:1081px;top:703px;width:1px;height:18px;background:#d4d4d4"></div>
<div style="position:absolute;left:1081px;top:721px;width:1px;height:18px;background:#d4d4d4"></div>
<div style="position:absolute;left:1081px;top:757px;width:1px;height:18px;background:#d4d4d4"></div>
<div style="position:absolute;left:1081px;top:775px;width:1px;height:18px;background:#d4d4d4"></div>
<div style="position:absolute;left:1081px;top:793px;width:1px;height:18px;background:#d4d4d4"></div>
<div style="position:absolute;left:1081px;top:811px;width:1px;height:18px;background:#d4d4d4"></div>
<div style="position:absolute;left:1081px;top:829px;width:1px;height:18px;background:#d4d4d4"></div>
<div style="position:absolute;left:1081px;top:847px;width:1px;height:18px;background:#d4d4d4"></div>
<div style="position:absolute;left:1081px;top:865px;width:1px;height:18px;background:#d4d4d4"></div>
<div style="position:absolute;left:1081px;top:883px;width:1px;height:18px;background:#d4d4d4"></div>
<div style="position:absolute;left:1081px;top:901px;width:1px;height:18px;background:#d4d4d4"></div>
<div style="position:absolute;left:1081px;top:919px;width:1px;height:18px;background:#d4d4d4"></div>
<div style="position:absolute;left:1178px;top:287px;width:1px;height:37px;background:#d4d4d4"></div>
<div style="position:absolute;left:1178px;top:325px;width:1px;height:18px;background:#d4d4d4"></div>
<div style="position:absolute;left:1178px;top:361px;width:1px;height:18px;background:#d4d4d4"></div>
<div style="position:absolute;left:1178px;top:379px;width:1px;height:18px;background:#d4d4d4"></div>
<div style="position:absolute;left:1178px;top:397px;width:1px;height:18px;background:#d4d4d4"></div>
<div style="position:absolute;left:1178px;top:415px;width:1px;height:18px;background:#d4d4d4"></div>
<div style="position:absolute;left:1178px;top:433px;width:1px;height:18px;background:#d4d4d4"></div>
<div style="position:absolute;left:1178px;top:451px;width:1px;height:18px;background:#d4d4d4"></div>
<div style="position:absolute;left:1178px;top:469px;width:1px;height:18px;background:#d4d4d4"></div>
<div style="position:absolute;left:1178px;top:487px;width:1px;height:18px;background:#d4d4d4"></div>
<div style="position:absolute;left:1178px;top:505px;width:1px;height:18px;background:#d4d4d4"></div>
<div style="position:absolute;left:1178px;top:523px;width:1px;height:18px;background:#d4d4d4"></div>
<div style="position:absolute;left:1178px;top:559px;width:1px;height:18px;background:#d4d4d4"></div>
<div style="position:absolute;left:1178px;top:577px;width:1px;height:18px;background:#d4d4d4"></div>
<div style="position:absolute;left:1178px;top:595px;width:1px;height:18px;background:#d4d4d4"></div>
<div style="position:absolute;left:1178px;top:613px;width:1px;height:18px;background:#d4d4d4"></div>
<div style="position:absolute;left:1178px;top:631px;width:1px;height:18px;background:#d4d4d4"></div>
<div style="position:absolute;left:1178px;top:649px;width:1px;height:18px;background:#d4d4d4"></div>
<div style="position:absolute;left:1178px;top:667px;width:1px;height:18px;background:#d4d4d4"></div>
<div style="position:absolute;left:1178px;top:685px;width:1px;height:18px;background:#d4d4d4"></div>
<div style="position:absolute;left:1178px;top:703px;width:1px;height:18px;background:#d4d4d4"></div>
<div style="position:absolute;left:1178px;top:721px;width:1px;height:18px;background:#d4d4d4"></div>
<div style="position:absolute;left:1178px;top:757px;width:1px;height:18px;background:#d4d4d4"></div>
<div style="position:absolute;left:1178px;top:775px;width:1px;height:18px;background:#d4d4d4"></div>
<div style="position:absolute;left:1178px;top:793px;width:1px;height:18px;background:#d4d4d4"></div>
<div style="position:absolute;left:1178px;top:811px;width:1px;height:18px;background:#d4d4d4"></div>
<div style="position:absolute;left:1178px;top:829px;width:1px;height:18px;background:#d4d4d4"></div>
<div style="position:absolute;left:1178px;top:847px;width:1px;height:18px;background:#d4d4d4"></div>
<div style="position:absolute;left:1178px;top:865px;width:1px;height:18px;background:#d4d4d4"></div>
<div style="position:absolute;left:1178px;top:883px;width:1px;height:18px;background:#d4d4d4"></div>
<div style="position:absolute;left:1178px;top:901px;width:1px;height:18px;background:#d4d4d4"></div>
<div style="position:absolute;left:1178px;top:919px;width:1px;height:18px;background:#d4d4d4"></div>
<div style="position:absolute;left:1275px;top:287px;width:1px;height:37px;background:#d4d4d4"></div>
<div style="position:absolute;left:1275px;top:325px;width:1px;height:18px;background:#d4d4d4"></div>
<div style="position:absolute;left:1275px;top:361px;width:1px;height:18px;background:#d4d4d4"></div>
<div style="position:absolute;left:1275px;top:379px;width:1px;height:18px;background:#d4d4d4"></div>
<div style="position:absolute;left:1275px;top:397px;width:1px;height:18px;background:#d4d4d4"></div>
<div style="position:absolute;left:1275px;top:415px;width:1px;height:18px;background:#d4d4d4"></div>
<div style="position:absolute;left:1275px;top:433px;width:1px;height:18px;background:#d4d4d4"></div>
<div style="position:absolute;left:1275px;top:451px;width:1px;height:18px;background:#d4d4d4"></div>
<div style="position:absolute;left:1275px;top:469px;width:1px;height:18px;background:#d4d4d4"></div>
<div style="position:absolute;left:1275px;top:487px;width:1px;height:18px;background:#d4d4d4"></div>
<div style="position:absolute;left:1275px;top:505px;width:1px;height:18px;background:#d4d4d4"></div>
<div style="position:absolute;left:1275px;top:523px;width:1px;height:18px;background:#d4d4d4"></div>
<div style="position:absolute;left:1275px;top:559px;width:1px;height:18px;background:#d4d4d4"></div>
<div style="position:absolute;left:1275px;top:577px;width:1px;height:18px;background:#d4d4d4"></div>
<div style="position:absolute;left:1275px;top:595px;width:1px;height:18px;background:#d4d4d4"></div>
<div style="position:absolute;left:1275px;top:613px;width:1px;height:18px;background:#d4d4d4"></div>
<div style="position:absolute;left:1275px;top:631px;width:1px;height:18px;background:#d4d4d4"></div>
<div style="position:absolute;left:1275px;top:649px;width:1px;height:18px;background:#d4d4d4"></div>
<div style="position:absolute;left:1275px;top:667px;width:1px;height:18px;background:#d4d4d4"></div>
<div style="position:absolute;left:1275px;top:685px;width:1px;height:18px;background:#d4d4d4"></div>
<div style="position:absolute;left:1275px;top:703px;width:1px;height:18px;background:#d4d4d4"></div>
<div style="position:absolute;left:1275px;top:721px;width:1px;height:18px;background:#d4d4d4"></div>
<div style="position:absolute;left:1275px;top:757px;width:1px;height:18px;background:#d4d4d4"></div>
<div style="position:absolute;left:1275px;top:775px;width:1px;height:18px;background:#d4d4d4"></div>
<div style="position:absolute;left:1275px;top:793px;width:1px;height:18px;background:#d4d4d4"></div>
<div style="position:absolute;left:1275px;top:811px;width:1px;height:18px;background:#d4d4d4"></div>
<div style="position:absolute;left:1275px;top:829px;width:1px;height:18px;background:#d4d4d4"></div>
<div style="position:absolute;left:1275px;top:847px;width:1px;height:18px;background:#d4d4d4"></div>
<div style="position:absolute;left:1275px;top:865px;width:1px;height:18px;background:#d4d4d4"></div>
<div style="position:absolute;left:1275px;top:883px;width:1px;height:18px;background:#d4d4d4"></div>
<div style="position:absolute;left:1275px;top:901px;width:1px;height:18px;background:#d4d4d4"></div>
<div style="position:absolute;left:1275px;top:919px;width:1px;height:18px;background:#d4d4d4"></div>
<div style="position:absolute;left:1372px;top:287px;width:1px;height:37px;background:#d4d4d4"></div>
<div style="position:absolute;left:1372px;top:325px;width:1px;height:18px;background:#d4d4d4"></div>
<div style="position:absolute;left:1372px;top:361px;width:1px;height:18px;background:#d4d4d4"></div>
<div style="position:absolute;left:1372px;top:379px;width:1px;height:18px;background:#d4d4d4"></div>
<div style="position:absolute;left:1372px;top:397px;width:1px;height:18px;background:#d4d4d4"></div>
<div style="position:absolute;left:1372px;top:415px;width:1px;height:18px;background:#d4d4d4"></div>
<div style="position:absolute;left:1372px;top:433px;width:1px;height:18px;background:#d4d4d4"></div>
<div style="position:absolute;left:1372px;top:451px;width:1px;height:18px;background:#d4d4d4"></div>
<div style="position:absolute;left:1372px;top:469px;width:1px;height:18px;background:#d4d4d4"></div>
<div style="position:absolute;left:1372px;top:487px;width:1px;height:18px;background:#d4d4d4"></div>
<div style="position:absolute;left:1372px;top:505px;width:1px;height:18px;background:#d4d4d4"></div>
<div style="position:absolute;left:1372px;top:523px;width:1px;height:18px;background:#d4d4d4"></div>
<div style="position:absolute;left:1372px;top:559px;width:1px;height:18px;background:#d4d4d4"></div>
<div style="position:absolute;left:1372px;top:577px;width:1px;height:18px;background:#d4d4d4"></div>
<div style="position:absolute;left:1372px;top:595px;width:1px;height:18px;background:#d4d4d4"></div>
<div style="position:absolute;left:1372px;top:613px;width:1px;height:18px;background:#d4d4d4"></div>
<div style="position:absolute;left:1372px;top:631px;width:1px;height:18px;background:#d4d4d4"></div>
<div style="position:absolute;left:1372px;top:649px;width:1px;height:18px;background:#d4d4d4"></div>
<div style="position:absolute;left:1372px;top:667px;width:1px;height:18px;background:#d4d4d4"></div>
<div style="position:absolute;left:1372px;top:685px;width:1px;height:18px;background:#d4d4d4"></div>
<div style="position:absolute;left:1372px;top:703px;width:1px;height:18px;background:#d4d4d4"></div>
<div style="position:absolute;left:1372px;top:721px;width:1px;height:18px;background:#d4d4d4"></div>
<div style="position:absolute;left:1372px;top:757px;width:1px;height:18px;background:#d4d4d4"></div>
<div style="position:absolute;left:1372px;top:775px;width:1px;height:18px;background:#d4d4d4"></div>
<div style="position:absolute;left:1372px;top:793px;width:1px;height:18px;background:#d4d4d4"></div>
<div style="position:absolute;left:1372px;top:811px;width:1px;height:18px;background:#d4d4d4"></div>
<div style="position:absolute;left:1372px;top:829px;width:1px;height:18px;background:#d4d4d4"></div>
<div style="position:absolute;left:1372px;top:847px;width:1px;height:18px;background:#d4d4d4"></div>
<div style="position:absolute;left:1372px;top:865px;width:1px;height:18px;background:#d4d4d4"></div>
<div style="position:absolute;left:1372px;top:883px;width:1px;height:18px;background:#d4d4d4"></div>
<div style="position:absolute;left:1372px;top:901px;width:1px;height:18px;background:#d4d4d4"></div>
<div style="position:absolute;left:1372px;top:919px;width:1px;height:18px;background:#d4d4d4"></div>
<div style="position:absolute;left:1469px;top:287px;width:1px;height:37px;background:#d4d4d4"></div>
<div style="position:absolute;left:1469px;top:325px;width:1px;height:18px;background:#d4d4d4"></div>
<div style="position:absolute;left:1469px;top:361px;width:1px;height:18px;background:#d4d4d4"></div>
<div style="position:absolute;left:1469px;top:379px;width:1px;height:18px;background:#d4d4d4"></div>
<div style="position:absolute;left:1469px;top:397px;width:1px;height:18px;background:#d4d4d4"></div>
<div style="position:absolute;left:1469px;top:415px;width:1px;height:18px;background:#d4d4d4"></div>
<div style="position:absolute;left:1469px;top:433px;width:1px;height:18px;background:#d4d4d4"></div>
<div style="position:absolute;left:1469px;top:451px;width:1px;height:18px;background:#d4d4d4"></div>
<div style="position:absolute;left:1469px;top:469px;width:1px;height:18px;background:#d4d4d4"></div>
<div style="position:absolute;left:1469px;top:487px;width:1px;height:18px;background:#d4d4d4"></div>
<div style="position:absolute;left:1469px;top:505px;width:1px;height:18px;background:#d4d4d4"></div>
<div style="position:absolute;left:1469px;top:523px;width:1px;height:18px;background:#d4d4d4"></div>
<div style="position:absolute;left:1469px;top:559px;width:1px;height:18px;background:#d4d4d4"></div>
<div style="position:absolute;left:1469px;top:577px;width:1px;height:18px;background:#d4d4d4"></div>
<div style="position:absolute;left:1469px;top:595px;width:1px;height:18px;background:#d4d4d4"></div>
<div style="position:absolute;left:1469px;top:613px;width:1px;height:18px;background:#d4d4d4"></div>
<div style="position:absolute;left:1469px;top:631px;width:1px;height:18px;background:#d4d4d4"></div>
<div style="position:absolute;left:1469px;top:649px;width:1px;height:18px;background:#d4d4d4"></div>
<div style="position:absolute;left:1469px;top:667px;width:1px;height:18px;background:#d4d4d4"></div>
<div style="position:absolute;left:1469px;top:685px;width:1px;height:18px;background:#d4d4d4"></div>
<div style="position:absolute;left:1469px;top:703px;width:1px;height:18px;background:#d4d4d4"></div>
<div style="position:absolute;left:1469px;top:721px;width:1px;height:18px;background:#d4d4d4"></div>
<div style="position:absolute;left:1469px;top:757px;width:1px;height:18px;background:#d4d4d4"></div>
<div style="position:absolute;left:1469px;top:775px;width:1px;height:18px;background:#d4d4d4"></div>
<div style="position:absolute;left:1469px;top:793px;width:1px;height:18px;background:#d4d4d4"></div>
<div style="position:absolute;left:1469px;top:811px;width:1px;height:18px;background:#d4d4d4"></div>
<div style="position:absolute;left:1469px;top:829px;width:1px;height:18px;background:#d4d4d4"></div>
<div style="position:absolute;left:1469px;top:847px;width:1px;height:18px;background:#d4d4d4"></div>
<div style="position:absolute;left:1469px;top:865px;width:1px;height:18px;background:#d4d4d4"></div>
<div style="position:absolute;left:1469px;top:883px;width:1px;height:18px;background:#d4d4d4"></div>
<div style="position:absolute;left:1469px;top:901px;width:1px;height:18px;background:#d4d4d4"></div>
<div style="position:absolute;left:1469px;top:919px;width:1px;height:18px;background:#d4d4d4"></div>
<div style="position:absolute;left:1566px;top:287px;width:1px;height:37px;background:#d4d4d4"></div>
<div style="position:absolute;left:1566px;top:325px;width:1px;height:18px;background:#d4d4d4"></div>
<div style="position:absolute;left:1566px;top:361px;width:1px;height:18px;background:#d4d4d4"></div>
<div style="position:absolute;left:1566px;top:379px;width:1px;height:18px;background:#d4d4d4"></div>
<div style="position:absolute;left:1566px;top:397px;width:1px;height:18px;background:#d4d4d4"></div>
<div style="position:absolute;left:1566px;top:415px;width:1px;height:18px;background:#d4d4d4"></div>
<div style="position:absolute;left:1566px;top:433px;width:1px;height:18px;background:#d4d4d4"></div>
<div style="position:absolute;left:1566px;top:451px;width:1px;height:18px;background:#d4d4d4"></div>
<div style="position:absolute;left:1566px;top:469px;width:1px;height:18px;background:#d4d4d4"></div>
<div style="position:absolute;left:1566px;top:487px;width:1px;height:18px;background:#d4d4d4"></div>
<div style="position:absolute;left:1566px;top:505px;width:1px;height:18px;background:#d4d4d4"></div>
<div style="position:absolute;left:1566px;top:523px;width:1px;height:18px;background:#d4d4d4"></div>
<div style="position:absolute;left:1566px;top:559px;width:1px;height:18px;background:#d4d4d4"></div>
<div style="position:absolute;left:1566px;top:577px;width:1px;height:18px;background:#d4d4d4"></div>
<div style="position:absolute;left:1566px;top:595px;width:1px;height:18px;background:#d4d4d4"></div>
<div style="position:absolute;left:1566px;top:613px;width:1px;height:18px;background:#d4d4d4"></div>
<div style="position:absolute;left:1566px;top:631px;width:1px;height:18px;background:#d4d4d4"></div>
<div style="position:absolute;left:1566px;top:649px;width:1px;height:18px;background:#d4d4d4"></div>
<div style="position:absolute;left:1566px;top:667px;width:1px;height:18px;background:#d4d4d4"></div>
<div style="position:absolute;left:1566px;top:685px;width:1px;height:18px;background:#d4d4d4"></div>
<div style="position:absolute;left:1566px;top:703px;width:1px;height:18px;background:#d4d4d4"></div>
<div style="position:absolute;left:1566px;top:721px;width:1px;height:18px;background:#d4d4d4"></div>
<div style="position:absolute;left:1566px;top:757px;width:1px;height:18px;background:#d4d4d4"></div>
<div style="position:absolute;left:1566px;top:775px;width:1px;height:18px;background:#d4d4d4"></div>
<div style="position:absolute;left:1566px;top:793px;width:1px;height:18px;background:#d4d4d4"></div>
<div style="position:absolute;left:1566px;top:811px;width:1px;height:18px;background:#d4d4d4"></div>
<div style="position:absolute;left:1566px;top:829px;width:1px;height:18px;background:#d4d4d4"></div>
<div style="position:absolute;left:1566px;top:847px;width:1px;height:18px;background:#d4d4d4"></div>
<div style="position:absolute;left:1566px;top:865px;width:1px;height:18px;background:#d4d4d4"></div>
<div style="position:absolute;left:1566px;top:883px;width:1px;height:18px;background:#d4d4d4"></div>
<div style="position:absolute;left:1566px;top:901px;width:1px;height:18px;background:#d4d4d4"></div>
<div style="position:absolute;left:1566px;top:919px;width:1px;height:18px;background:#d4d4d4"></div>
<div style="position:absolute;left:1663px;top:287px;width:1px;height:37px;background:#d4d4d4"></div>
<div style="position:absolute;left:1663px;top:325px;width:1px;height:18px;background:#d4d4d4"></div>
<div style="position:absolute;left:1663px;top:361px;width:1px;height:18px;background:#d4d4d4"></div>
<div style="position:absolute;left:1663px;top:379px;width:1px;height:18px;background:#d4d4d4"></div>
<div style="position:absolute;left:1663px;top:397px;width:1px;height:18px;background:#d4d4d4"></div>
<div style="position:absolute;left:1663px;top:415px;width:1px;height:18px;background:#d4d4d4"></div>
<div style="position:absolute;left:1663px;top:433px;width:1px;height:18px;background:#d4d4d4"></div>
<div style="position:absolute;left:1663px;top:451px;width:1px;height:18px;background:#d4d4d4"></div>
<div style="position:absolute;left:1663px;top:469px;width:1px;height:18px;background:#d4d4d4"></div>
<div style="position:absolute;left:1663px;top:487px;width:1px;height:18px;background:#d4d4d4"></div>
<div style="position:absolute;left:1663px;top:505px;width:1px;height:18px;background:#d4d4d4"></div>
<div style="position:absolute;left:1663px;top:523px;width:1px;height:18px;background:#d4d4d4"></div>
<div style="position:absolute;left:1663px;top:577px;width:1px;height:18px;background:#d4d4d4"></div>
<div style="position:absolute;left:1663px;top:595px;width:1px;height:18px;background:#d4d4d4"></div>
<div style="position:absolute;left:1663px;top:631px;width:1px;height:18px;background:#d4d4d4"></div>
<div style="position:absolute;left:1663px;top:649px;width:1px;height:18px;background:#d4d4d4"></div>
<div style="position:absolute;left:1663px;top:667px;width:1px;height:18px;background:#d4d4d4"></div>
<div style="position:absolute;left:1663px;top:685px;width:1px;height:18px;background:#d4d4d4"></div>
<div style="position:absolute;left:1663px;top:703px;width:1px;height:18px;background:#d4d4d4"></div>
<div style="position:absolute;left:1663px;top:721px;width:1px;height:18px;background:#d4d4d4"></div>
<div style="position:absolute;left:1663px;top:757px;width:1px;height:18px;background:#d4d4d4"></div>
<div style="position:absolute;left:1663px;top:775px;width:1px;height:18px;background:#d4d4d4"></div>
<div style="position:absolute;left:1663px;top:793px;width:1px;height:18px;background:#d4d4d4"></div>
<div style="position:absolute;left:1663px;top:811px;width:1px;height:18px;background:#d4d4d4"></div>
<div style="position:absolute;left:1663px;top:829px;width:1px;height:18px;background:#d4d4d4"></div>
<div style="position:absolute;left:1663px;top:847px;width:1px;height:18px;background:#d4d4d4"></div>
<div style="position:absolute;left:1663px;top:865px;width:1px;height:18px;background:#d4d4d4"></div>
<div style="position:absolute;left:1663px;top:883px;width:1px;height:18px;background:#d4d4d4"></div>
<div style="position:absolute;left:1663px;top:901px;width:1px;height:18px;background:#d4d4d4"></div>
<div style="position:absolute;left:1663px;top:919px;width:1px;height:18px;background:#d4d4d4"></div>
<div style="position:absolute;left:1760px;top:287px;width:1px;height:37px;background:#d4d4d4"></div>
<div style="position:absolute;left:1760px;top:325px;width:1px;height:18px;background:#d4d4d4"></div>
<div style="position:absolute;left:1760px;top:361px;width:1px;height:18px;background:#d4d4d4"></div>
<div style="position:absolute;left:1760px;top:379px;width:1px;height:18px;background:#d4d4d4"></div>
<div style="position:absolute;left:1760px;top:397px;width:1px;height:18px;background:#d4d4d4"></div>
<div style="position:absolute;left:1760px;top:415px;width:1px;height:18px;background:#d4d4d4"></div>
<div style="position:absolute;left:1760px;top:433px;width:1px;height:18px;background:#d4d4d4"></div>
<div style="position:absolute;left:1760px;top:451px;width:1px;height:18px;background:#d4d4d4"></div>
<div style="position:absolute;left:1760px;top:469px;width:1px;height:18px;background:#d4d4d4"></div>
<div style="position:absolute;left:1760px;top:487px;width:1px;height:18px;background:#d4d4d4"></div>
<div style="position:absolute;left:1760px;top:505px;width:1px;height:18px;background:#d4d4d4"></div>
<div style="position:absolute;left:1760px;top:523px;width:1px;height:18px;background:#d4d4d4"></div>
<div style="position:absolute;left:1760px;top:577px;width:1px;height:18px;background:#d4d4d4"></div>
<div style="position:absolute;left:1760px;top:595px;width:1px;height:18px;background:#d4d4d4"></div>
<div style="position:absolute;left:1760px;top:631px;width:1px;height:18px;background:#d4d4d4"></div>
<div style="position:absolute;left:1760px;top:649px;width:1px;height:18px;background:#d4d4d4"></div>
<div style="position:absolute;left:1760px;top:667px;width:1px;height:18px;background:#d4d4d4"></div>
<div style="position:absolute;left:1760px;top:703px;width:1px;height:18px;background:#d4d4d4"></div>
<div style="position:absolute;left:1760px;top:721px;width:1px;height:18px;background:#d4d4d4"></div>
<div style="position:absolute;left:1760px;top:757px;width:1px;height:18px;background:#d4d4d4"></div>
<div style="position:absolute;left:1760px;top:775px;width:1px;height:18px;background:#d4d4d4"></div>
<div style="position:absolute;left:1760px;top:793px;width:1px;height:18px;background:#d4d4d4"></div>
<div style="position:absolute;left:1760px;top:811px;width:1px;height:18px;background:#d4d4d4"></div>
<div style="position:absolute;left:1760px;top:829px;width:1px;height:18px;background:#d4d4d4"></div>
<div style="position:absolute;left:1760px;top:847px;width:1px;height:18px;background:#d4d4d4"></div>
<div style="position:absolute;left:1760px;top:865px;width:1px;height:18px;background:#d4d4d4"></div>
<div style="position:absolute;left:1760px;top:883px;width:1px;height:18px;background:#d4d4d4"></div>
<div style="position:absolute;left:1760px;top:901px;width:1px;height:18px;background:#d4d4d4"></div>
<div style="position:absolute;left:1760px;top:919px;width:1px;height:18px;background:#d4d4d4"></div>
<div style="position:absolute;left:1857px;top:287px;width:1px;height:37px;background:#d4d4d4"></div>
<div style="position:absolute;left:1857px;top:325px;width:1px;height:18px;background:#d4d4d4"></div>
<div style="position:absolute;left:1857px;top:361px;width:1px;height:18px;background:#d4d4d4"></div>
<div style="position:absolute;left:1857px;top:379px;width:1px;height:18px;background:#d4d4d4"></div>
<div style="position:absolute;left:1857px;top:397px;width:1px;height:18px;background:#d4d4d4"></div>
<div style="position:absolute;left:1857px;top:415px;width:1px;height:18px;background:#d4d4d4"></div>
<div style="position:absolute;left:1857px;top:433px;width:1px;height:18px;background:#d4d4d4"></div>
<div style="position:absolute;left:1857px;top:451px;width:1px;height:18px;background:#d4d4d4"></div>
<div style="position:absolute;left:1857px;top:469px;width:1px;height:18px;background:#d4d4d4"></div>
<div style="position:absolute;left:1857px;top:487px;width:1px;height:18px;background:#d4d4d4"></div>
<div style="position:absolute;left:1857px;top:505px;width:1px;height:18px;background:#d4d4d4"></div>
<div style="position:absolute;left:1857px;top:523px;width:1px;height:18px;background:#d4d4d4"></div>
<div style="position:absolute;left:1857px;top:577px;width:1px;height:18px;background:#d4d4d4"></div>
<div style="position:absolute;left:1857px;top:595px;width:1px;height:18px;background:#d4d4d4"></div>
<div style="position:absolute;left:1857px;top:631px;width:1px;height:18px;background:#d4d4d4"></div>
<div style="position:absolute;left:1857px;top:649px;width:1px;height:18px;background:#d4d4d4"></div>
<div style="position:absolute;left:1857px;top:667px;width:1px;height:18px;background:#d4d4d4"></div>
<div style="position:absolute;left:1857px;top:703px;width:1px;height:18px;background:#d4d4d4"></div>
<div style="position:absolute;left:1857px;top:721px;width:1px;height:18px;background:#d4d4d4"></div>
<div style="position:absolute;left:1857px;top:757px;width:1px;height:18px;background:#d4d4d4"></div>
<div style="position:absolute;left:1857px;top:775px;width:1px;height:18px;background:#d4d4d4"></div>
<div style="position:absolute;left:1857px;top:793px;width:1px;height:18px;background:#d4d4d4"></div>
<div style="position:absolute;left:1857px;top:811px;width:1px;height:18px;background:#d4d4d4"></div>
<div style="position:absolute;left:1857px;top:829px;width:1px;height:18px;background:#d4d4d4"></div>
<div style="position:absolute;left:1857px;top:847px;width:1px;height:18px;background:#d4d4d4"></div>
<div style="position:absolute;left:1857px;top:865px;width:1px;height:18px;background:#d4d4d4"></div>
<div style="position:absolute;left:1857px;top:883px;width:1px;height:18px;background:#d4d4d4"></div>
<div style="position:absolute;left:1857px;top:901px;width:1px;height:18px;background:#d4d4d4"></div>
<div style="position:absolute;left:1857px;top:919px;width:1px;height:18px;background:#d4d4d4"></div>
<div class="c " style="left:29px;top:287px;width:152px;height:37px;line-height:39px;text-align:center;">Hạng mục</div>
<div class="c " style="left:182px;top:287px;width:96px;height:37px;line-height:39px;text-align:center;">Giá trị hiện tại</div>
<div class="c" style="left:279px;top:287px;width:67px;height:37px;line-height:18px;text-align:center;white-space:normal;padding-top:1px">Thông số<br>độ nhạy</div>
<div class="c " style="left:347px;top:287px;width:87px;height:37px;line-height:39px;text-align:center;">Thay đổi</div>
<div class="c " style="left:435px;top:287px;width:257px;height:37px;line-height:39px;text-align:center;letter-spacing:.08px;">Chỉ tiêu hiệu quả kinh doanh</div>
<div class="c " style="left:693px;top:287px;width:97px;height:37px;line-height:39px;text-align:center;">Giá trị hiện tại</div>
<div class="c " style="left:29px;top:325px;width:152px;height:17px;line-height:19px;padding-left:2px;">Chi phí xây dựng & thiết kế</div>
<div class="c  n" style="left:182px;top:325px;width:96px;height:17px;line-height:19px;text-align:right;padding-right:7px;">445,948,800</div>
<div class="c  n" style="left:279px;top:325px;width:67px;height:17px;line-height:19px;text-align:right;padding-right:2.5px;">0<i>%</i></div>
<div class="c  n" style="left:347px;top:325px;width:87px;height:17px;line-height:19px;text-align:right;padding-right:2.5px;">10<i>%</i></div>
<div class="c  n" style="left:791px;top:325px;width:96px;height:17px;line-height:19px;text-align:right;padding-right:7px;">222,974,400</div>
<div class="c  n" style="left:888px;top:325px;width:96px;height:17px;line-height:19px;text-align:right;padding-right:7px;">267,569,280</div>
<div class="c  n" style="left:985px;top:325px;width:96px;height:17px;line-height:19px;text-align:right;padding-right:7px;">312,164,160</div>
<div class="c  n" style="left:1082px;top:325px;width:96px;height:17px;line-height:19px;text-align:right;padding-right:7px;">356,759,040</div>
<div class="c  n" style="left:1179px;top:325px;width:96px;height:17px;line-height:19px;text-align:right;padding-right:7px;">401,353,920</div>
<div class="c  n" style="left:1276px;top:325px;width:96px;height:17px;line-height:19px;text-align:right;padding-right:7px;">445,948,800</div>
<div class="c  n" style="left:1373px;top:325px;width:96px;height:17px;line-height:19px;text-align:right;padding-right:7px;">490,543,680</div>
<div class="c  n" style="left:1470px;top:325px;width:96px;height:17px;line-height:19px;text-align:right;padding-right:7px;">535,138,560</div>
<div class="c  n" style="left:1567px;top:325px;width:96px;height:17px;line-height:19px;text-align:right;padding-right:7px;">579,733,440</div>
<div class="c  n" style="left:1664px;top:325px;width:96px;height:17px;line-height:19px;text-align:right;padding-right:7px;">624,328,320</div>
<div class="c  n" style="left:1761px;top:325px;width:96px;height:17px;line-height:19px;text-align:right;padding-right:7px;">668,923,200</div>
<div class="c  n" style="left:791px;top:343px;width:96px;height:17px;line-height:19px;text-align:right;padding-right:2.5px;">-50<i>%</i></div>
<div class="c  n" style="left:888px;top:343px;width:96px;height:17px;line-height:19px;text-align:right;padding-right:2.5px;">-40<i>%</i></div>
<div class="c  n" style="left:985px;top:343px;width:96px;height:17px;line-height:19px;text-align:right;padding-right:2.5px;">-30<i>%</i></div>
<div class="c  n" style="left:1082px;top:343px;width:96px;height:17px;line-height:19px;text-align:right;padding-right:2.5px;">-20<i>%</i></div>
<div class="c  n" style="left:1179px;top:343px;width:96px;height:17px;line-height:19px;text-align:right;padding-right:2.5px;">-10<i>%</i></div>
<div class="c  n" style="left:1276px;top:343px;width:96px;height:17px;line-height:19px;text-align:right;padding-right:2.5px;">0<i>%</i></div>
<div class="c  n" style="left:1373px;top:343px;width:96px;height:17px;line-height:19px;text-align:right;padding-right:2.5px;">10<i>%</i></div>
<div class="c  n" style="left:1470px;top:343px;width:96px;height:17px;line-height:19px;text-align:right;padding-right:2.5px;">20<i>%</i></div>
<div class="c  n" style="left:1567px;top:343px;width:96px;height:17px;line-height:19px;text-align:right;padding-right:2.5px;">30<i>%</i></div>
<div class="c  n" style="left:1664px;top:343px;width:96px;height:17px;line-height:19px;text-align:right;padding-right:2.5px;">40<i>%</i></div>
<div class="c  n" style="left:1761px;top:343px;width:96px;height:17px;line-height:19px;text-align:right;padding-right:2.5px;">50<i>%</i></div>
<div class="c b" style="left:182px;top:361px;width:96px;height:143px;line-height:145px;text-align:center;letter-spacing:.4px;padding-left:1px;line-height:143px;">Điều kiện</div>
<div class="c  n" style="left:279px;top:361px;width:67px;height:17px;line-height:19px;text-align:right;padding-right:2px;">&gt;=</div>
<div class="c  n" style="left:347px;top:361px;width:87px;height:17px;line-height:19px;text-align:right;padding-right:2px;">36</div>
<div class="c " style="left:435px;top:361px;width:257px;height:17px;line-height:19px;padding-left:2px;">Thời gian hoàn vốn</div>
<div class="c rb n" style="left:693px;top:361px;width:97px;height:17px;line-height:19px;text-align:right;padding-right:7px;">24.2</div>
<div class="c rb n" style="left:791px;top:361px;width:96px;height:17px;line-height:19px;text-align:right;padding-right:7px;">17.7</div>
<div class="c rb n" style="left:888px;top:361px;width:96px;height:17px;line-height:19px;text-align:right;padding-right:7px;">18.9</div>
<div class="c rb n" style="left:985px;top:361px;width:96px;height:17px;line-height:19px;text-align:right;padding-right:7px;">20.2</div>
<div class="c rb n" style="left:1082px;top:361px;width:96px;height:17px;line-height:19px;text-align:right;padding-right:7px;">21.5</div>
<div class="c rb n" style="left:1179px;top:361px;width:96px;height:17px;line-height:19px;text-align:right;padding-right:7px;">22.8</div>
<div class="c rb n" style="left:1276px;top:361px;width:96px;height:17px;line-height:19px;text-align:right;padding-right:7px;">24.2</div>
<div class="c rb n" style="left:1373px;top:361px;width:96px;height:17px;line-height:19px;text-align:right;padding-right:7px;">25.5</div>
<div class="c rb n" style="left:1470px;top:361px;width:96px;height:17px;line-height:19px;text-align:right;padding-right:7px;">26.8</div>
<div class="c rb n" style="left:1567px;top:361px;width:96px;height:17px;line-height:19px;text-align:right;padding-right:7px;">28.1</div>
<div class="c rb n" style="left:1664px;top:361px;width:96px;height:17px;line-height:19px;text-align:right;padding-right:7px;">29.5</div>
<div class="c rb n" style="left:1761px;top:361px;width:96px;height:17px;line-height:19px;text-align:right;padding-right:7px;">30.9</div>
<div class="c " style="left:435px;top:379px;width:257px;height:17px;line-height:19px;padding-left:2px;">Doanh thu hòa vốn/ 1 đơn vị thời gian</div>
<div class="c  n" style="left:693px;top:379px;width:97px;height:17px;line-height:19px;text-align:right;padding-right:7px;">3,458,757</div>
<div class="c  n" style="left:791px;top:379px;width:96px;height:17px;line-height:19px;text-align:right;padding-right:7px;">3,411,813</div>
<div class="c  n" style="left:888px;top:379px;width:96px;height:17px;line-height:19px;text-align:right;padding-right:7px;">3,421,202</div>
<div class="c  n" style="left:985px;top:379px;width:96px;height:17px;line-height:19px;text-align:right;padding-right:7px;">3,430,590</div>
<div class="c  n" style="left:1082px;top:379px;width:96px;height:17px;line-height:19px;text-align:right;padding-right:7px;">3,439,979</div>
<div class="c  n" style="left:1179px;top:379px;width:96px;height:17px;line-height:19px;text-align:right;padding-right:7px;">3,449,368</div>
<div class="c  n" style="left:1276px;top:379px;width:96px;height:17px;line-height:19px;text-align:right;padding-right:7px;">3,458,757</div>
<div class="c  n" style="left:1373px;top:379px;width:96px;height:17px;line-height:19px;text-align:right;padding-right:7px;">3,468,146</div>
<div class="c  n" style="left:1470px;top:379px;width:96px;height:17px;line-height:19px;text-align:right;padding-right:7px;">3,477,535</div>
<div class="c  n" style="left:1567px;top:379px;width:96px;height:17px;line-height:19px;text-align:right;padding-right:7px;">3,486,924</div>
<div class="c  n" style="left:1664px;top:379px;width:96px;height:17px;line-height:19px;text-align:right;padding-right:7px;">3,496,313</div>
<div class="c  n" style="left:1761px;top:379px;width:96px;height:17px;line-height:19px;text-align:right;padding-right:7px;">3,505,701</div>
<div class="c " style="left:435px;top:397px;width:257px;height:17px;line-height:19px;padding-left:2px;">Sản lượng hòa vốn/ 1 đơn vị thời gian</div>
<div class="c  n" style="left:693px;top:397px;width:97px;height:17px;line-height:19px;text-align:right;padding-right:7px;">16</div>
<div class="c  n" style="left:791px;top:397px;width:96px;height:17px;line-height:19px;text-align:right;padding-right:7px;">16</div>
<div class="c  n" style="left:888px;top:397px;width:96px;height:17px;line-height:19px;text-align:right;padding-right:7px;">16</div>
<div class="c  n" style="left:985px;top:397px;width:96px;height:17px;line-height:19px;text-align:right;padding-right:7px;">16</div>
<div class="c  n" style="left:1082px;top:397px;width:96px;height:17px;line-height:19px;text-align:right;padding-right:7px;">16</div>
<div class="c  n" style="left:1179px;top:397px;width:96px;height:17px;line-height:19px;text-align:right;padding-right:7px;">16</div>
<div class="c  n" style="left:1276px;top:397px;width:96px;height:17px;line-height:19px;text-align:right;padding-right:7px;">16</div>
<div class="c  n" style="left:1373px;top:397px;width:96px;height:17px;line-height:19px;text-align:right;padding-right:7px;">16</div>
<div class="c  n" style="left:1470px;top:397px;width:96px;height:17px;line-height:19px;text-align:right;padding-right:7px;">16</div>
<div class="c  n" style="left:1567px;top:397px;width:96px;height:17px;line-height:19px;text-align:right;padding-right:7px;">16</div>
<div class="c  n" style="left:1664px;top:397px;width:96px;height:17px;line-height:19px;text-align:right;padding-right:7px;">16</div>
<div class="c  n" style="left:1761px;top:397px;width:96px;height:17px;line-height:19px;text-align:right;padding-right:7px;">16</div>
<div class="c  n" style="left:279px;top:415px;width:67px;height:17px;line-height:19px;text-align:right;padding-right:2px;">&gt;=</div>
<div class="c  n" style="left:347px;top:415px;width:87px;height:17px;line-height:19px;text-align:right;padding-right:7px;">25,000,000</div>
<div class="c " style="left:435px;top:415px;width:257px;height:17px;line-height:19px;padding-left:2px;">Thu nhập ròng bình quân 1 tháng</div>
<div class="c  n" style="left:693px;top:415px;width:97px;height:17px;line-height:19px;text-align:right;padding-right:7px;">39,717,745</div>
<div class="c  n" style="left:791px;top:415px;width:96px;height:17px;line-height:19px;text-align:right;padding-right:7px;">41,739,008</div>
<div class="c  n" style="left:888px;top:415px;width:96px;height:17px;line-height:19px;text-align:right;padding-right:7px;">41,334,755</div>
<div class="c  n" style="left:985px;top:415px;width:96px;height:17px;line-height:19px;text-align:right;padding-right:7px;">40,930,502</div>
<div class="c  n" style="left:1082px;top:415px;width:96px;height:17px;line-height:19px;text-align:right;padding-right:7px;">40,526,250</div>
<div class="c  n" style="left:1179px;top:415px;width:96px;height:17px;line-height:19px;text-align:right;padding-right:7px;">40,121,997</div>
<div class="c  n" style="left:1276px;top:415px;width:96px;height:17px;line-height:19px;text-align:right;padding-right:7px;">39,717,745</div>
<div class="c  n" style="left:1373px;top:415px;width:96px;height:17px;line-height:19px;text-align:right;padding-right:7px;">39,313,492</div>
<div class="c  n" style="left:1470px;top:415px;width:96px;height:17px;line-height:19px;text-align:right;padding-right:7px;">38,909,239</div>
<div class="c  n" style="left:1567px;top:415px;width:96px;height:17px;line-height:19px;text-align:right;padding-right:7px;">38,504,987</div>
<div class="c  n" style="left:1664px;top:415px;width:96px;height:17px;line-height:19px;text-align:right;padding-right:7px;">38,100,734</div>
<div class="c  n" style="left:1761px;top:415px;width:96px;height:17px;line-height:19px;text-align:right;padding-right:7px;">37,696,482</div>
<div class="c  n" style="left:279px;top:433px;width:67px;height:17px;line-height:19px;text-align:right;padding-right:2px;">&gt;=</div>
<div class="c  n" style="left:347px;top:433px;width:87px;height:17px;line-height:19px;text-align:right;padding-right:2.5px;">12<i>%</i></div>
<div class="c " style="left:435px;top:433px;width:257px;height:17px;line-height:19px;padding-left:2px;">IRR</div>
<div class="c  n" style="left:693px;top:433px;width:97px;height:17px;line-height:19px;text-align:right;padding-right:2.5px;">79<i>%</i></div>
<div class="c  n" style="left:791px;top:433px;width:96px;height:17px;line-height:19px;text-align:right;padding-right:2.5px;">128<i>%</i></div>
<div class="c  n" style="left:888px;top:433px;width:96px;height:17px;line-height:19px;text-align:right;padding-right:2.5px;">116<i>%</i></div>
<div class="c  n" style="left:985px;top:433px;width:96px;height:17px;line-height:19px;text-align:right;padding-right:2.5px;">105<i>%</i></div>
<div class="c  n" style="left:1082px;top:433px;width:96px;height:17px;line-height:19px;text-align:right;padding-right:2.5px;">95<i>%</i></div>
<div class="c  n" style="left:1179px;top:433px;width:96px;height:17px;line-height:19px;text-align:right;padding-right:2.5px;">86<i>%</i></div>
<div class="c  n" style="left:1276px;top:433px;width:96px;height:17px;line-height:19px;text-align:right;padding-right:2.5px;">79<i>%</i></div>
<div class="c  n" style="left:1373px;top:433px;width:96px;height:17px;line-height:19px;text-align:right;padding-right:2.5px;">72<i>%</i></div>
<div class="c  n" style="left:1470px;top:433px;width:96px;height:17px;line-height:19px;text-align:right;padding-right:2.5px;">65<i>%</i></div>
<div class="c  n" style="left:1567px;top:433px;width:96px;height:17px;line-height:19px;text-align:right;padding-right:2.5px;">60<i>%</i></div>
<div class="c  n" style="left:1664px;top:433px;width:96px;height:17px;line-height:19px;text-align:right;padding-right:2.5px;">54<i>%</i></div>
<div class="c  n" style="left:1761px;top:433px;width:96px;height:17px;line-height:19px;text-align:right;padding-right:2.5px;">49<i>%</i></div>
<div class="c  n" style="left:279px;top:451px;width:67px;height:17px;line-height:19px;text-align:right;padding-right:2px;">&gt;=</div>
<div class="c  n" style="left:347px;top:451px;width:87px;height:17px;line-height:19px;text-align:right;padding-right:2.5px;">20<i>%</i></div>
<div class="c " style="left:435px;top:451px;width:257px;height:17px;line-height:19px;padding-left:2px;">ROE (Lợi nhuận BQ 1 năm/Vốn chủ sở hữu)</div>
<div class="c  n" style="left:693px;top:451px;width:97px;height:17px;line-height:19px;text-align:right;padding-right:2.5px;">103<i>%</i></div>
<div class="c  n" style="left:791px;top:451px;width:96px;height:17px;line-height:19px;text-align:right;padding-right:2.5px;">165<i>%</i></div>
<div class="c  n" style="left:888px;top:451px;width:96px;height:17px;line-height:19px;text-align:right;padding-right:2.5px;">148<i>%</i></div>
<div class="c  n" style="left:985px;top:451px;width:96px;height:17px;line-height:19px;text-align:right;padding-right:2.5px;">134<i>%</i></div>
<div class="c  n" style="left:1082px;top:451px;width:96px;height:17px;line-height:19px;text-align:right;padding-right:2.5px;">122<i>%</i></div>
<div class="c  n" style="left:1179px;top:451px;width:96px;height:17px;line-height:19px;text-align:right;padding-right:2.5px;">112<i>%</i></div>
<div class="c  n" style="left:1276px;top:451px;width:96px;height:17px;line-height:19px;text-align:right;padding-right:2.5px;">103<i>%</i></div>
<div class="c  n" style="left:1373px;top:451px;width:96px;height:17px;line-height:19px;text-align:right;padding-right:2.5px;">96<i>%</i></div>
<div class="c  n" style="left:1470px;top:451px;width:96px;height:17px;line-height:19px;text-align:right;padding-right:2.5px;">90<i>%</i></div>
<div class="c  n" style="left:1567px;top:451px;width:96px;height:17px;line-height:19px;text-align:right;padding-right:2.5px;">84<i>%</i></div>
<div class="c  n" style="left:1664px;top:451px;width:96px;height:17px;line-height:19px;text-align:right;padding-right:2.5px;">79<i>%</i></div>
<div class="c  n" style="left:1761px;top:451px;width:96px;height:17px;line-height:19px;text-align:right;padding-right:2.5px;">75<i>%</i></div>
<div class="c  n" style="left:279px;top:469px;width:67px;height:17px;line-height:19px;text-align:right;padding-right:2px;">&gt;=</div>
<div class="c  n" style="left:347px;top:469px;width:87px;height:17px;line-height:19px;text-align:right;padding-right:2.5px;">5<i>%</i></div>
<div class="c " style="left:435px;top:469px;width:257px;height:17px;line-height:19px;padding-left:2px;">ROI (Lợi nhuận BQ 1 năm/Tổng vốn đầu tư)</div>
<div class="c  n" style="left:693px;top:469px;width:97px;height:17px;line-height:19px;text-align:right;padding-right:2.5px;">62<i>%</i></div>
<div class="c  n" style="left:791px;top:469px;width:96px;height:17px;line-height:19px;text-align:right;padding-right:2.5px;">98<i>%</i></div>
<div class="c  n" style="left:888px;top:469px;width:96px;height:17px;line-height:19px;text-align:right;padding-right:2.5px;">88<i>%</i></div>
<div class="c  n" style="left:985px;top:469px;width:96px;height:17px;line-height:19px;text-align:right;padding-right:2.5px;">80<i>%</i></div>
<div class="c  n" style="left:1082px;top:469px;width:96px;height:17px;line-height:19px;text-align:right;padding-right:2.5px;">73<i>%</i></div>
<div class="c  n" style="left:1179px;top:469px;width:96px;height:17px;line-height:19px;text-align:right;padding-right:2.5px;">67<i>%</i></div>
<div class="c  n" style="left:1276px;top:469px;width:96px;height:17px;line-height:19px;text-align:right;padding-right:2.5px;">62<i>%</i></div>
<div class="c  n" style="left:1373px;top:469px;width:96px;height:17px;line-height:19px;text-align:right;padding-right:2.5px;">57<i>%</i></div>
<div class="c  n" style="left:1470px;top:469px;width:96px;height:17px;line-height:19px;text-align:right;padding-right:2.5px;">54<i>%</i></div>
<div class="c  n" style="left:1567px;top:469px;width:96px;height:17px;line-height:19px;text-align:right;padding-right:2.5px;">50<i>%</i></div>
<div class="c  n" style="left:1664px;top:469px;width:96px;height:17px;line-height:19px;text-align:right;padding-right:2.5px;">47<i>%</i></div>
<div class="c  n" style="left:1761px;top:469px;width:96px;height:17px;line-height:19px;text-align:right;padding-right:2.5px;">45<i>%</i></div>
<div class="c  n" style="left:279px;top:487px;width:67px;height:17px;line-height:19px;text-align:right;padding-right:2px;">&gt;=</div>
<div class="c  n" style="left:347px;top:487px;width:87px;height:17px;line-height:19px;text-align:right;padding-right:2.5px;">10<i>%</i></div>
<div class="c " style="left:435px;top:487px;width:257px;height:17px;line-height:19px;padding-left:2px;">ROS (Lợi nhuận BQ 1 năm/Doanh thu)</div>
<div class="c  n" style="left:693px;top:487px;width:97px;height:17px;line-height:19px;text-align:right;padding-right:2.5px;">22<i>%</i></div>
<div class="c  n" style="left:791px;top:487px;width:96px;height:17px;line-height:19px;text-align:right;padding-right:2.5px;">23<i>%</i></div>
<div class="c  n" style="left:888px;top:487px;width:96px;height:17px;line-height:19px;text-align:right;padding-right:2.5px;">22<i>%</i></div>
<div class="c  n" style="left:985px;top:487px;width:96px;height:17px;line-height:19px;text-align:right;padding-right:2.5px;">22<i>%</i></div>
<div class="c  n" style="left:1082px;top:487px;width:96px;height:17px;line-height:19px;text-align:right;padding-right:2.5px;">22<i>%</i></div>
<div class="c  n" style="left:1179px;top:487px;width:96px;height:17px;line-height:19px;text-align:right;padding-right:2.5px;">22<i>%</i></div>
<div class="c  n" style="left:1276px;top:487px;width:96px;height:17px;line-height:19px;text-align:right;padding-right:2.5px;">22<i>%</i></div>
<div class="c  n" style="left:1373px;top:487px;width:96px;height:17px;line-height:19px;text-align:right;padding-right:2.5px;">22<i>%</i></div>
<div class="c  n" style="left:1470px;top:487px;width:96px;height:17px;line-height:19px;text-align:right;padding-right:2.5px;">22<i>%</i></div>
<div class="c  n" style="left:1567px;top:487px;width:96px;height:17px;line-height:19px;text-align:right;padding-right:2.5px;">22<i>%</i></div>
<div class="c  n" style="left:1664px;top:487px;width:96px;height:17px;line-height:19px;text-align:right;padding-right:2.5px;">22<i>%</i></div>
<div class="c  n" style="left:1761px;top:487px;width:96px;height:17px;line-height:19px;text-align:right;padding-right:2.5px;">22<i>%</i></div>
<div class="c " style="left:29px;top:523px;width:152px;height:17px;line-height:19px;padding-left:2px;">Chi phí thuê mặt bằng</div>
<div class="c  n" style="left:182px;top:523px;width:96px;height:17px;line-height:19px;text-align:right;padding-right:7px;">40,000,000</div>
<div class="c  n" style="left:279px;top:523px;width:67px;height:17px;line-height:19px;text-align:right;padding-right:2.5px;">0<i>%</i></div>
<div class="c  n" style="left:347px;top:523px;width:87px;height:17px;line-height:19px;text-align:right;padding-right:2.5px;">10<i>%</i></div>
<div class="c  n" style="left:791px;top:523px;width:96px;height:17px;line-height:19px;text-align:right;padding-right:7px;">20,000,000</div>
<div class="c  n" style="left:888px;top:523px;width:96px;height:17px;line-height:19px;text-align:right;padding-right:7px;">24,000,000</div>
<div class="c  n" style="left:985px;top:523px;width:96px;height:17px;line-height:19px;text-align:right;padding-right:7px;">28,000,000</div>
<div class="c  n" style="left:1082px;top:523px;width:96px;height:17px;line-height:19px;text-align:right;padding-right:7px;">32,000,000</div>
<div class="c  n" style="left:1179px;top:523px;width:96px;height:17px;line-height:19px;text-align:right;padding-right:7px;">36,000,000</div>
<div class="c  n" style="left:1276px;top:523px;width:96px;height:17px;line-height:19px;text-align:right;padding-right:7px;">40,000,000</div>
<div class="c  n" style="left:1373px;top:523px;width:96px;height:17px;line-height:19px;text-align:right;padding-right:7px;">44,000,000</div>
<div class="c  n" style="left:1470px;top:523px;width:96px;height:17px;line-height:19px;text-align:right;padding-right:7px;">48,000,000</div>
<div class="c  n" style="left:1567px;top:523px;width:96px;height:17px;line-height:19px;text-align:right;padding-right:7px;">52,000,000</div>
<div class="c  n" style="left:1664px;top:523px;width:96px;height:17px;line-height:19px;text-align:right;padding-right:7px;">56,000,000</div>
<div class="c  n" style="left:1761px;top:523px;width:96px;height:17px;line-height:19px;text-align:right;padding-right:7px;">60,000,000</div>
<div class="c  n" style="left:791px;top:541px;width:96px;height:17px;line-height:19px;text-align:right;padding-right:2.5px;">-50<i>%</i></div>
<div class="c  n" style="left:888px;top:541px;width:96px;height:17px;line-height:19px;text-align:right;padding-right:2.5px;">-40<i>%</i></div>
<div class="c  n" style="left:985px;top:541px;width:96px;height:17px;line-height:19px;text-align:right;padding-right:2.5px;">-30<i>%</i></div>
<div class="c  n" style="left:1082px;top:541px;width:96px;height:17px;line-height:19px;text-align:right;padding-right:2.5px;">-20<i>%</i></div>
<div class="c  n" style="left:1179px;top:541px;width:96px;height:17px;line-height:19px;text-align:right;padding-right:2.5px;">-10<i>%</i></div>
<div class="c  n" style="left:1276px;top:541px;width:96px;height:17px;line-height:19px;text-align:right;padding-right:2.5px;">0<i>%</i></div>
<div class="c  n" style="left:1373px;top:541px;width:96px;height:17px;line-height:19px;text-align:right;padding-right:2.5px;">10<i>%</i></div>
<div class="c  n" style="left:1470px;top:541px;width:96px;height:17px;line-height:19px;text-align:right;padding-right:2.5px;">20<i>%</i></div>
<div class="c  n" style="left:1567px;top:541px;width:96px;height:17px;line-height:19px;text-align:right;padding-right:2.5px;">30<i>%</i></div>
<div class="c  n" style="left:1664px;top:541px;width:96px;height:17px;line-height:19px;text-align:right;padding-right:2.5px;">40<i>%</i></div>
<div class="c  n" style="left:1761px;top:541px;width:96px;height:17px;line-height:19px;text-align:right;padding-right:2.5px;">50<i>%</i></div>
<div class="c b" style="left:182px;top:559px;width:96px;height:143px;line-height:145px;text-align:center;letter-spacing:.4px;padding-left:1px;line-height:143px;">Điều kiện</div>
<div class="c  n" style="left:279px;top:559px;width:67px;height:17px;line-height:19px;text-align:right;padding-right:2px;">&gt;=</div>
<div class="c  n" style="left:347px;top:559px;width:87px;height:17px;line-height:19px;text-align:right;padding-right:2px;">36</div>
<div class="c " style="left:435px;top:559px;width:257px;height:17px;line-height:19px;padding-left:2px;">Thời gian hoàn vốn</div>
<div class="c rb n" style="left:693px;top:559px;width:97px;height:17px;line-height:19px;text-align:right;padding-right:7px;">24.2</div>
<div class="c rb n" style="left:791px;top:559px;width:96px;height:17px;line-height:19px;text-align:right;padding-right:7px;">15.4</div>
<div class="c rb n" style="left:888px;top:559px;width:96px;height:17px;line-height:19px;text-align:right;padding-right:7px;">16.7</div>
<div class="c rb n" style="left:985px;top:559px;width:96px;height:17px;line-height:19px;text-align:right;padding-right:7px;">18.1</div>
<div class="c rb n" style="left:1082px;top:559px;width:96px;height:17px;line-height:19px;text-align:right;padding-right:7px;">19.8</div>
<div class="c rb n" style="left:1179px;top:559px;width:96px;height:17px;line-height:19px;text-align:right;padding-right:7px;">21.8</div>
<div class="c rb n" style="left:1276px;top:559px;width:96px;height:17px;line-height:19px;text-align:right;padding-right:7px;">24.2</div>
<div class="c rb n" style="left:1373px;top:559px;width:96px;height:17px;line-height:19px;text-align:right;padding-right:7px;">26.9</div>
<div class="c rb n" style="left:1470px;top:559px;width:96px;height:17px;line-height:19px;text-align:right;padding-right:7px;">30.4</div>
<div class="c rb n" style="left:1567px;top:559px;width:96px;height:17px;line-height:19px;text-align:right;padding-right:7px;">34.8</div>
<div class="c rb pk n" style="left:1664px;top:559px;width:96px;height:17px;line-height:19px;text-align:right;padding-right:7px;">40.5</div>
<div class="c rb pk n" style="left:1761px;top:559px;width:96px;height:17px;line-height:19px;text-align:right;padding-right:7px;">48.1</div>
<div class="c " style="left:435px;top:577px;width:257px;height:17px;line-height:19px;padding-left:2px;">Doanh thu hòa vốn/ 1 đơn vị thời gian</div>
<div class="c  n" style="left:693px;top:577px;width:97px;height:17px;line-height:19px;text-align:right;padding-right:7px;">3,458,757</div>
<div class="c  n" style="left:791px;top:577px;width:96px;height:17px;line-height:19px;text-align:right;padding-right:7px;">2,563,135</div>
<div class="c  n" style="left:888px;top:577px;width:96px;height:17px;line-height:19px;text-align:right;padding-right:7px;">2,742,260</div>
<div class="c  n" style="left:985px;top:577px;width:96px;height:17px;line-height:19px;text-align:right;padding-right:7px;">2,921,384</div>
<div class="c  n" style="left:1082px;top:577px;width:96px;height:17px;line-height:19px;text-align:right;padding-right:7px;">3,100,508</div>
<div class="c  n" style="left:1179px;top:577px;width:96px;height:17px;line-height:19px;text-align:right;padding-right:7px;">3,279,633</div>
<div class="c  n" style="left:1276px;top:577px;width:96px;height:17px;line-height:19px;text-align:right;padding-right:7px;">3,458,757</div>
<div class="c  n" style="left:1373px;top:577px;width:96px;height:17px;line-height:19px;text-align:right;padding-right:7px;">3,637,881</div>
<div class="c  n" style="left:1470px;top:577px;width:96px;height:17px;line-height:19px;text-align:right;padding-right:7px;">3,817,006</div>
<div class="c  n" style="left:1567px;top:577px;width:96px;height:17px;line-height:19px;text-align:right;padding-right:7px;">3,996,130</div>
<div class="c  n" style="left:1664px;top:577px;width:96px;height:17px;line-height:19px;text-align:right;padding-right:7px;">4,175,254</div>
<div class="c  n" style="left:1761px;top:577px;width:96px;height:17px;line-height:19px;text-align:right;padding-right:7px;">4,354,379</div>
<div class="c " style="left:435px;top:595px;width:257px;height:17px;line-height:19px;padding-left:2px;">Sản lượng hòa vốn/ 1 đơn vị thời gian</div>
<div class="c  n" style="left:693px;top:595px;width:97px;height:17px;line-height:19px;text-align:right;padding-right:7px;">16</div>
<div class="c  n" style="left:791px;top:595px;width:96px;height:17px;line-height:19px;text-align:right;padding-right:7px;">12</div>
<div class="c  n" style="left:888px;top:595px;width:96px;height:17px;line-height:19px;text-align:right;padding-right:7px;">13</div>
<div class="c  n" style="left:985px;top:595px;width:96px;height:17px;line-height:19px;text-align:right;padding-right:7px;">14</div>
<div class="c  n" style="left:1082px;top:595px;width:96px;height:17px;line-height:19px;text-align:right;padding-right:7px;">14</div>
<div class="c  n" style="left:1179px;top:595px;width:96px;height:17px;line-height:19px;text-align:right;padding-right:7px;">15</div>
<div class="c  n" style="left:1276px;top:595px;width:96px;height:17px;line-height:19px;text-align:right;padding-right:7px;">16</div>
<div class="c  n" style="left:1373px;top:595px;width:96px;height:17px;line-height:19px;text-align:right;padding-right:7px;">17</div>
<div class="c  n" style="left:1470px;top:595px;width:96px;height:17px;line-height:19px;text-align:right;padding-right:7px;">18</div>
<div class="c  n" style="left:1567px;top:595px;width:96px;height:17px;line-height:19px;text-align:right;padding-right:7px;">19</div>
<div class="c  n" style="left:1664px;top:595px;width:96px;height:17px;line-height:19px;text-align:right;padding-right:7px;">19</div>
<div class="c  n" style="left:1761px;top:595px;width:96px;height:17px;line-height:19px;text-align:right;padding-right:7px;">20</div>
<div class="c  n" style="left:279px;top:613px;width:67px;height:17px;line-height:19px;text-align:right;padding-right:2px;">&gt;=</div>
<div class="c  n" style="left:347px;top:613px;width:87px;height:17px;line-height:19px;text-align:right;padding-right:7px;">25,000,000</div>
<div class="c " style="left:435px;top:613px;width:257px;height:17px;line-height:19px;padding-left:2px;">Thu nhập ròng bình quân 1 tháng</div>
<div class="c  n" style="left:693px;top:613px;width:97px;height:17px;line-height:19px;text-align:right;padding-right:7px;">39,717,745</div>
<div class="c  n" style="left:791px;top:613px;width:96px;height:17px;line-height:19px;text-align:right;padding-right:7px;">61,870,170</div>
<div class="c  n" style="left:888px;top:613px;width:96px;height:17px;line-height:19px;text-align:right;padding-right:7px;">57,439,685</div>
<div class="c  n" style="left:985px;top:613px;width:96px;height:17px;line-height:19px;text-align:right;padding-right:7px;">53,009,200</div>
<div class="c  n" style="left:1082px;top:613px;width:96px;height:17px;line-height:19px;text-align:right;padding-right:7px;">48,578,715</div>
<div class="c  n" style="left:1179px;top:613px;width:96px;height:17px;line-height:19px;text-align:right;padding-right:7px;">44,148,230</div>
<div class="c  n" style="left:1276px;top:613px;width:96px;height:17px;line-height:19px;text-align:right;padding-right:7px;">39,717,745</div>
<div class="c  n" style="left:1373px;top:613px;width:96px;height:17px;line-height:19px;text-align:right;padding-right:7px;">35,287,260</div>
<div class="c  n" style="left:1470px;top:613px;width:96px;height:17px;line-height:19px;text-align:right;padding-right:7px;">30,856,775</div>
<div class="c  n" style="left:1567px;top:613px;width:96px;height:17px;line-height:19px;text-align:right;padding-right:7px;">26,426,290</div>
<div class="c pk n" style="left:1664px;top:613px;width:96px;height:17px;line-height:19px;text-align:right;padding-right:7px;">21,995,805</div>
<div class="c pk n" style="left:1761px;top:613px;width:96px;height:17px;line-height:19px;text-align:right;padding-right:7px;">17,565,320</div>
<div class="c  n" style="left:279px;top:631px;width:67px;height:17px;line-height:19px;text-align:right;padding-right:2px;">&gt;=</div>
<div class="c  n" style="left:347px;top:631px;width:87px;height:17px;line-height:19px;text-align:right;padding-right:2.5px;">12<i>%</i></div>
<div class="c " style="left:435px;top:631px;width:257px;height:17px;line-height:19px;padding-left:2px;">IRR</div>
<div class="c  n" style="left:693px;top:631px;width:97px;height:17px;line-height:19px;text-align:right;padding-right:2.5px;">79<i>%</i></div>
<div class="c  n" style="left:791px;top:631px;width:96px;height:17px;line-height:19px;text-align:right;padding-right:2.5px;">212<i>%</i></div>
<div class="c  n" style="left:888px;top:631px;width:96px;height:17px;line-height:19px;text-align:right;padding-right:2.5px;">173<i>%</i></div>
<div class="c  n" style="left:985px;top:631px;width:96px;height:17px;line-height:19px;text-align:right;padding-right:2.5px;">142<i>%</i></div>
<div class="c  n" style="left:1082px;top:631px;width:96px;height:17px;line-height:19px;text-align:right;padding-right:2.5px;">117<i>%</i></div>
<div class="c  n" style="left:1179px;top:631px;width:96px;height:17px;line-height:19px;text-align:right;padding-right:2.5px;">97<i>%</i></div>
<div class="c  n" style="left:1276px;top:631px;width:96px;height:17px;line-height:19px;text-align:right;padding-right:2.5px;">79<i>%</i></div>
<div class="c  n" style="left:1373px;top:631px;width:96px;height:17px;line-height:19px;text-align:right;padding-right:2.5px;">63<i>%</i></div>
<div class="c  n" style="left:1470px;top:631px;width:96px;height:17px;line-height:19px;text-align:right;padding-right:2.5px;">49<i>%</i></div>
<div class="c  n" style="left:1567px;top:631px;width:96px;height:17px;line-height:19px;text-align:right;padding-right:2.5px;">36<i>%</i></div>
<div class="c  n" style="left:1664px;top:631px;width:96px;height:17px;line-height:19px;text-align:right;padding-right:2.5px;">24<i>%</i></div>
<div class="c  n" style="left:1761px;top:631px;width:96px;height:17px;line-height:19px;text-align:right;padding-right:2.5px;">13<i>%</i></div>
<div class="c  n" style="left:279px;top:649px;width:67px;height:17px;line-height:19px;text-align:right;padding-right:2px;">&gt;=</div>
<div class="c  n" style="left:347px;top:649px;width:87px;height:17px;line-height:19px;text-align:right;padding-right:2.5px;">20<i>%</i></div>
<div class="c " style="left:435px;top:649px;width:257px;height:17px;line-height:19px;padding-left:2px;">ROE (Lợi nhuận BQ 1 năm/Vốn chủ sở hữu)</div>
<div class="c  n" style="left:693px;top:649px;width:97px;height:17px;line-height:19px;text-align:right;padding-right:2.5px;">103<i>%</i></div>
<div class="c  n" style="left:791px;top:649px;width:96px;height:17px;line-height:19px;text-align:right;padding-right:2.5px;">200<i>%</i></div>
<div class="c  n" style="left:888px;top:649px;width:96px;height:17px;line-height:19px;text-align:right;padding-right:2.5px;">178<i>%</i></div>
<div class="c  n" style="left:985px;top:649px;width:96px;height:17px;line-height:19px;text-align:right;padding-right:2.5px;">158<i>%</i></div>
<div class="c  n" style="left:1082px;top:649px;width:96px;height:17px;line-height:19px;text-align:right;padding-right:2.5px;">139<i>%</i></div>
<div class="c  n" style="left:1179px;top:649px;width:96px;height:17px;line-height:19px;text-align:right;padding-right:2.5px;">121<i>%</i></div>
<div class="c  n" style="left:1276px;top:649px;width:96px;height:17px;line-height:19px;text-align:right;padding-right:2.5px;">103<i>%</i></div>
<div class="c  n" style="left:1373px;top:649px;width:96px;height:17px;line-height:19px;text-align:right;padding-right:2.5px;">87<i>%</i></div>
<div class="c  n" style="left:1470px;top:649px;width:96px;height:17px;line-height:19px;text-align:right;padding-right:2.5px;">72<i>%</i></div>
<div class="c  n" style="left:1567px;top:649px;width:96px;height:17px;line-height:19px;text-align:right;padding-right:2.5px;">57<i>%</i></div>
<div class="c  n" style="left:1664px;top:649px;width:96px;height:17px;line-height:19px;text-align:right;padding-right:2.5px;">43<i>%</i></div>
<div class="c  n" style="left:1761px;top:649px;width:96px;height:17px;line-height:19px;text-align:right;padding-right:2.5px;">29<i>%</i></div>
<div class="c  n" style="left:279px;top:667px;width:67px;height:17px;line-height:19px;text-align:right;padding-right:2px;">&gt;=</div>
<div class="c  n" style="left:347px;top:667px;width:87px;height:17px;line-height:19px;text-align:right;padding-right:2.5px;">5<i>%</i></div>
<div class="c " style="left:435px;top:667px;width:257px;height:17px;line-height:19px;padding-left:2px;">ROI (Lợi nhuận BQ 1 năm/Tổng vốn đầu tư)</div>
<div class="c  n" style="left:693px;top:667px;width:97px;height:17px;line-height:19px;text-align:right;padding-right:2.5px;">62<i>%</i></div>
<div class="c  n" style="left:791px;top:667px;width:96px;height:17px;line-height:19px;text-align:right;padding-right:2.5px;">119<i>%</i></div>
<div class="c  n" style="left:888px;top:667px;width:96px;height:17px;line-height:19px;text-align:right;padding-right:2.5px;">106<i>%</i></div>
<div class="c  n" style="left:985px;top:667px;width:96px;height:17px;line-height:19px;text-align:right;padding-right:2.5px;">94<i>%</i></div>
<div class="c  n" style="left:1082px;top:667px;width:96px;height:17px;line-height:19px;text-align:right;padding-right:2.5px;">83<i>%</i></div>
<div class="c  n" style="left:1179px;top:667px;width:96px;height:17px;line-height:19px;text-align:right;padding-right:2.5px;">72<i>%</i></div>
<div class="c  n" style="left:1276px;top:667px;width:96px;height:17px;line-height:19px;text-align:right;padding-right:2.5px;">62<i>%</i></div>
<div class="c  n" style="left:1373px;top:667px;width:96px;height:17px;line-height:19px;text-align:right;padding-right:2.5px;">52<i>%</i></div>
<div class="c  n" style="left:1470px;top:667px;width:96px;height:17px;line-height:19px;text-align:right;padding-right:2.5px;">43<i>%</i></div>
<div class="c  n" style="left:1567px;top:667px;width:96px;height:17px;line-height:19px;text-align:right;padding-right:2.5px;">34<i>%</i></div>
<div class="c  n" style="left:1664px;top:667px;width:96px;height:17px;line-height:19px;text-align:right;padding-right:2.5px;">25<i>%</i></div>
<div class="c  n" style="left:1761px;top:667px;width:96px;height:17px;line-height:19px;text-align:right;padding-right:2.5px;">17<i>%</i></div>
<div class="c  n" style="left:279px;top:685px;width:67px;height:17px;line-height:19px;text-align:right;padding-right:2px;">&gt;=</div>
<div class="c  n" style="left:347px;top:685px;width:87px;height:17px;line-height:19px;text-align:right;padding-right:2.5px;">10<i>%</i></div>
<div class="c " style="left:435px;top:685px;width:257px;height:17px;line-height:19px;padding-left:2px;">ROS (Lợi nhuận BQ 1 năm/Doanh thu)</div>
<div class="c  n" style="left:693px;top:685px;width:97px;height:17px;line-height:19px;text-align:right;padding-right:2.5px;">22<i>%</i></div>
<div class="c  n" style="left:791px;top:685px;width:96px;height:17px;line-height:19px;text-align:right;padding-right:2.5px;">37<i>%</i></div>
<div class="c  n" style="left:888px;top:685px;width:96px;height:17px;line-height:19px;text-align:right;padding-right:2.5px;">34<i>%</i></div>
<div class="c  n" style="left:985px;top:685px;width:96px;height:17px;line-height:19px;text-align:right;padding-right:2.5px;">31<i>%</i></div>
<div class="c  n" style="left:1082px;top:685px;width:96px;height:17px;line-height:19px;text-align:right;padding-right:2.5px;">28<i>%</i></div>
<div class="c  n" style="left:1179px;top:685px;width:96px;height:17px;line-height:19px;text-align:right;padding-right:2.5px;">25<i>%</i></div>
<div class="c  n" style="left:1276px;top:685px;width:96px;height:17px;line-height:19px;text-align:right;padding-right:2.5px;">22<i>%</i></div>
<div class="c  n" style="left:1373px;top:685px;width:96px;height:17px;line-height:19px;text-align:right;padding-right:2.5px;">19<i>%</i></div>
<div class="c  n" style="left:1470px;top:685px;width:96px;height:17px;line-height:19px;text-align:right;padding-right:2.5px;">16<i>%</i></div>
<div class="c  n" style="left:1567px;top:685px;width:96px;height:17px;line-height:19px;text-align:right;padding-right:2.5px;">13<i>%</i></div>
<div class="c  n" style="left:1664px;top:685px;width:96px;height:17px;line-height:19px;text-align:right;padding-right:2.5px;">10<i>%</i></div>
<div class="c pk n" style="left:1761px;top:685px;width:96px;height:17px;line-height:19px;text-align:right;padding-right:2.5px;">7<i>%</i></div>
<div class="c " style="left:29px;top:721px;width:152px;height:17px;line-height:19px;padding-left:2px;">Lương cố định</div>
<div class="c  n" style="left:182px;top:721px;width:96px;height:17px;line-height:19px;text-align:right;padding-right:7px;">27,000,000</div>
<div class="c  n" style="left:279px;top:721px;width:67px;height:17px;line-height:19px;text-align:right;padding-right:2.5px;">0<i>%</i></div>
<div class="c  n" style="left:347px;top:721px;width:87px;height:17px;line-height:19px;text-align:right;padding-right:2.5px;">10<i>%</i></div>
<div class="c  n" style="left:791px;top:721px;width:96px;height:17px;line-height:19px;text-align:right;padding-right:7px;">13,500,000</div>
<div class="c  n" style="left:888px;top:721px;width:96px;height:17px;line-height:19px;text-align:right;padding-right:7px;">16,200,000</div>
<div class="c  n" style="left:985px;top:721px;width:96px;height:17px;line-height:19px;text-align:right;padding-right:7px;">18,900,000</div>
<div class="c  n" style="left:1082px;top:721px;width:96px;height:17px;line-height:19px;text-align:right;padding-right:7px;">21,600,000</div>
<div class="c  n" style="left:1179px;top:721px;width:96px;height:17px;line-height:19px;text-align:right;padding-right:7px;">24,300,000</div>
<div class="c  n" style="left:1276px;top:721px;width:96px;height:17px;line-height:19px;text-align:right;padding-right:7px;">27,000,000</div>
<div class="c  n" style="left:1373px;top:721px;width:96px;height:17px;line-height:19px;text-align:right;padding-right:7px;">29,700,000</div>
<div class="c  n" style="left:1470px;top:721px;width:96px;height:17px;line-height:19px;text-align:right;padding-right:7px;">32,400,000</div>
<div class="c  n" style="left:1567px;top:721px;width:96px;height:17px;line-height:19px;text-align:right;padding-right:7px;">35,100,000</div>
<div class="c  n" style="left:1664px;top:721px;width:96px;height:17px;line-height:19px;text-align:right;padding-right:7px;">37,800,000</div>
<div class="c  n" style="left:1761px;top:721px;width:96px;height:17px;line-height:19px;text-align:right;padding-right:7px;">40,500,000</div>
<div class="c  n" style="left:791px;top:739px;width:96px;height:17px;line-height:19px;text-align:right;padding-right:2.5px;">-50<i>%</i></div>
<div class="c  n" style="left:888px;top:739px;width:96px;height:17px;line-height:19px;text-align:right;padding-right:2.5px;">-40<i>%</i></div>
<div class="c  n" style="left:985px;top:739px;width:96px;height:17px;line-height:19px;text-align:right;padding-right:2.5px;">-30<i>%</i></div>
<div class="c  n" style="left:1082px;top:739px;width:96px;height:17px;line-height:19px;text-align:right;padding-right:2.5px;">-20<i>%</i></div>
<div class="c  n" style="left:1179px;top:739px;width:96px;height:17px;line-height:19px;text-align:right;padding-right:2.5px;">-10<i>%</i></div>
<div class="c  n" style="left:1276px;top:739px;width:96px;height:17px;line-height:19px;text-align:right;padding-right:2.5px;">0<i>%</i></div>
<div class="c  n" style="left:1373px;top:739px;width:96px;height:17px;line-height:19px;text-align:right;padding-right:2.5px;">10<i>%</i></div>
<div class="c  n" style="left:1470px;top:739px;width:96px;height:17px;line-height:19px;text-align:right;padding-right:2.5px;">20<i>%</i></div>
<div class="c  n" style="left:1567px;top:739px;width:96px;height:17px;line-height:19px;text-align:right;padding-right:2.5px;">30<i>%</i></div>
<div class="c  n" style="left:1664px;top:739px;width:96px;height:17px;line-height:19px;text-align:right;padding-right:2.5px;">40<i>%</i></div>
<div class="c  n" style="left:1761px;top:739px;width:96px;height:17px;line-height:19px;text-align:right;padding-right:2.5px;">50<i>%</i></div>
<div class="c b" style="left:182px;top:757px;width:96px;height:143px;line-height:145px;text-align:center;letter-spacing:.4px;padding-left:1px;line-height:143px;">Điều kiện</div>
<div class="c  n" style="left:279px;top:757px;width:67px;height:17px;line-height:19px;text-align:right;padding-right:2px;">&gt;=</div>
<div class="c  n" style="left:347px;top:757px;width:87px;height:17px;line-height:19px;text-align:right;padding-right:2px;">36</div>
<div class="c " style="left:435px;top:757px;width:257px;height:17px;line-height:19px;padding-left:2px;">Thời gian hoàn vốn</div>
<div class="c rb n" style="left:693px;top:757px;width:97px;height:17px;line-height:19px;text-align:right;padding-right:7px;">24.2</div>
<div class="c rb n" style="left:791px;top:757px;width:96px;height:17px;line-height:19px;text-align:right;padding-right:7px;">18.7</div>
<div class="c rb n" style="left:888px;top:757px;width:96px;height:17px;line-height:19px;text-align:right;padding-right:7px;">19.6</div>
<div class="c rb n" style="left:985px;top:757px;width:96px;height:17px;line-height:19px;text-align:right;padding-right:7px;">20.5</div>
<div class="c rb n" style="left:1082px;top:757px;width:96px;height:17px;line-height:19px;text-align:right;padding-right:7px;">21.6</div>
<div class="c rb n" style="left:1179px;top:757px;width:96px;height:17px;line-height:19px;text-align:right;padding-right:7px;">22.8</div>
<div class="c rb n" style="left:1276px;top:757px;width:96px;height:17px;line-height:19px;text-align:right;padding-right:7px;">24.2</div>
<div class="c rb n" style="left:1373px;top:757px;width:96px;height:17px;line-height:19px;text-align:right;padding-right:7px;">25.6</div>
<div class="c rb n" style="left:1470px;top:757px;width:96px;height:17px;line-height:19px;text-align:right;padding-right:7px;">27.3</div>
<div class="c rb n" style="left:1567px;top:757px;width:96px;height:17px;line-height:19px;text-align:right;padding-right:7px;">29.3</div>
<div class="c rb n" style="left:1664px;top:757px;width:96px;height:17px;line-height:19px;text-align:right;padding-right:7px;">31.6</div>
<div class="c rb n" style="left:1761px;top:757px;width:96px;height:17px;line-height:19px;text-align:right;padding-right:7px;">34.4</div>
<div class="c " style="left:435px;top:775px;width:257px;height:17px;line-height:19px;padding-left:2px;">Doanh thu hòa vốn/ 1 đơn vị thời gian</div>
<div class="c  n" style="left:693px;top:775px;width:97px;height:17px;line-height:19px;text-align:right;padding-right:7px;">3,458,757</div>
<div class="c  n" style="left:791px;top:775px;width:96px;height:17px;line-height:19px;text-align:right;padding-right:7px;">2,902,213</div>
<div class="c  n" style="left:888px;top:775px;width:96px;height:17px;line-height:19px;text-align:right;padding-right:7px;">3,013,522</div>
<div class="c  n" style="left:985px;top:775px;width:96px;height:17px;line-height:19px;text-align:right;padding-right:7px;">3,124,831</div>
<div class="c  n" style="left:1082px;top:775px;width:96px;height:17px;line-height:19px;text-align:right;padding-right:7px;">3,236,140</div>
<div class="c  n" style="left:1179px;top:775px;width:96px;height:17px;line-height:19px;text-align:right;padding-right:7px;">3,347,448</div>
<div class="c  n" style="left:1276px;top:775px;width:96px;height:17px;line-height:19px;text-align:right;padding-right:7px;">3,458,757</div>
<div class="c  n" style="left:1373px;top:775px;width:96px;height:17px;line-height:19px;text-align:right;padding-right:7px;">3,570,066</div>
<div class="c  n" style="left:1470px;top:775px;width:96px;height:17px;line-height:19px;text-align:right;padding-right:7px;">3,681,375</div>
<div class="c  n" style="left:1567px;top:775px;width:96px;height:17px;line-height:19px;text-align:right;padding-right:7px;">3,792,683</div>
<div class="c  n" style="left:1664px;top:775px;width:96px;height:17px;line-height:19px;text-align:right;padding-right:7px;">3,903,992</div>
<div class="c  n" style="left:1761px;top:775px;width:96px;height:17px;line-height:19px;text-align:right;padding-right:7px;">4,015,301</div>
<div class="c " style="left:435px;top:793px;width:257px;height:17px;line-height:19px;padding-left:2px;">Sản lượng hòa vốn/ 1 đơn vị thời gian</div>
<div class="c  n" style="left:693px;top:793px;width:97px;height:17px;line-height:19px;text-align:right;padding-right:7px;">16</div>
<div class="c  n" style="left:791px;top:793px;width:96px;height:17px;line-height:19px;text-align:right;padding-right:7px;">14</div>
<div class="c  n" style="left:888px;top:793px;width:96px;height:17px;line-height:19px;text-align:right;padding-right:7px;">14</div>
<div class="c  n" style="left:985px;top:793px;width:96px;height:17px;line-height:19px;text-align:right;padding-right:7px;">15</div>
<div class="c  n" style="left:1082px;top:793px;width:96px;height:17px;line-height:19px;text-align:right;padding-right:7px;">15</div>
<div class="c  n" style="left:1179px;top:793px;width:96px;height:17px;line-height:19px;text-align:right;padding-right:7px;">16</div>
<div class="c  n" style="left:1276px;top:793px;width:96px;height:17px;line-height:19px;text-align:right;padding-right:7px;">16</div>
<div class="c  n" style="left:1373px;top:793px;width:96px;height:17px;line-height:19px;text-align:right;padding-right:7px;">17</div>
<div class="c  n" style="left:1470px;top:793px;width:96px;height:17px;line-height:19px;text-align:right;padding-right:7px;">17</div>
<div class="c  n" style="left:1567px;top:793px;width:96px;height:17px;line-height:19px;text-align:right;padding-right:7px;">18</div>
<div class="c  n" style="left:1664px;top:793px;width:96px;height:17px;line-height:19px;text-align:right;padding-right:7px;">18</div>
<div class="c  n" style="left:1761px;top:793px;width:96px;height:17px;line-height:19px;text-align:right;padding-right:7px;">19</div>
<div class="c  n" style="left:279px;top:811px;width:67px;height:17px;line-height:19px;text-align:right;padding-right:2px;">&gt;=</div>
<div class="c  n" style="left:347px;top:811px;width:87px;height:17px;line-height:19px;text-align:right;padding-right:7px;">25,000,000</div>
<div class="c " style="left:435px;top:811px;width:257px;height:17px;line-height:19px;padding-left:2px;">Thu nhập ròng bình quân 1 tháng</div>
<div class="c  n" style="left:693px;top:811px;width:97px;height:17px;line-height:19px;text-align:right;padding-right:7px;">39,717,745</div>
<div class="c  n" style="left:791px;top:811px;width:96px;height:17px;line-height:19px;text-align:right;padding-right:7px;">54,186,949</div>
<div class="c  n" style="left:888px;top:811px;width:96px;height:17px;line-height:19px;text-align:right;padding-right:7px;">51,293,108</div>
<div class="c  n" style="left:985px;top:811px;width:96px;height:17px;line-height:19px;text-align:right;padding-right:7px;">48,399,267</div>
<div class="c  n" style="left:1082px;top:811px;width:96px;height:17px;line-height:19px;text-align:right;padding-right:7px;">45,505,426</div>
<div class="c  n" style="left:1179px;top:811px;width:96px;height:17px;line-height:19px;text-align:right;padding-right:7px;">42,611,585</div>
<div class="c  n" style="left:1276px;top:811px;width:96px;height:17px;line-height:19px;text-align:right;padding-right:7px;">39,717,745</div>
<div class="c  n" style="left:1373px;top:811px;width:96px;height:17px;line-height:19px;text-align:right;padding-right:7px;">36,823,904</div>
<div class="c  n" style="left:1470px;top:811px;width:96px;height:17px;line-height:19px;text-align:right;padding-right:7px;">33,930,063</div>
<div class="c  n" style="left:1567px;top:811px;width:96px;height:17px;line-height:19px;text-align:right;padding-right:7px;">31,036,222</div>
<div class="c  n" style="left:1664px;top:811px;width:96px;height:17px;line-height:19px;text-align:right;padding-right:7px;">28,142,381</div>
<div class="c  n" style="left:1761px;top:811px;width:96px;height:17px;line-height:19px;text-align:right;padding-right:7px;">25,248,540</div>
<div class="c  n" style="left:279px;top:829px;width:67px;height:17px;line-height:19px;text-align:right;padding-right:2px;">&gt;=</div>
<div class="c  n" style="left:347px;top:829px;width:87px;height:17px;line-height:19px;text-align:right;padding-right:2.5px;">12<i>%</i></div>
<div class="c " style="left:435px;top:829px;width:257px;height:17px;line-height:19px;padding-left:2px;">IRR</div>
<div class="c  n" style="left:693px;top:829px;width:97px;height:17px;line-height:19px;text-align:right;padding-right:2.5px;">79<i>%</i></div>
<div class="c  n" style="left:791px;top:829px;width:96px;height:17px;line-height:19px;text-align:right;padding-right:2.5px;">125<i>%</i></div>
<div class="c  n" style="left:888px;top:829px;width:96px;height:17px;line-height:19px;text-align:right;padding-right:2.5px;">115<i>%</i></div>
<div class="c  n" style="left:985px;top:829px;width:96px;height:17px;line-height:19px;text-align:right;padding-right:2.5px;">106<i>%</i></div>
<div class="c  n" style="left:1082px;top:829px;width:96px;height:17px;line-height:19px;text-align:right;padding-right:2.5px;">96<i>%</i></div>
<div class="c  n" style="left:1179px;top:829px;width:96px;height:17px;line-height:19px;text-align:right;padding-right:2.5px;">87<i>%</i></div>
<div class="c  n" style="left:1276px;top:829px;width:96px;height:17px;line-height:19px;text-align:right;padding-right:2.5px;">79<i>%</i></div>
<div class="c  n" style="left:1373px;top:829px;width:96px;height:17px;line-height:19px;text-align:right;padding-right:2.5px;">70<i>%</i></div>
<div class="c  n" style="left:1470px;top:829px;width:96px;height:17px;line-height:19px;text-align:right;padding-right:2.5px;">62<i>%</i></div>
<div class="c  n" style="left:1567px;top:829px;width:96px;height:17px;line-height:19px;text-align:right;padding-right:2.5px;">54<i>%</i></div>
<div class="c  n" style="left:1664px;top:829px;width:96px;height:17px;line-height:19px;text-align:right;padding-right:2.5px;">46<i>%</i></div>
<div class="c  n" style="left:1761px;top:829px;width:96px;height:17px;line-height:19px;text-align:right;padding-right:2.5px;">38<i>%</i></div>
<div class="c  n" style="left:279px;top:847px;width:67px;height:17px;line-height:19px;text-align:right;padding-right:2px;">&gt;=</div>
<div class="c  n" style="left:347px;top:847px;width:87px;height:17px;line-height:19px;text-align:right;padding-right:2.5px;">20<i>%</i></div>
<div class="c " style="left:435px;top:847px;width:257px;height:17px;line-height:19px;padding-left:2px;">ROE (Lợi nhuận BQ 1 năm/Vốn chủ sở hữu)</div>
<div class="c  n" style="left:693px;top:847px;width:97px;height:17px;line-height:19px;text-align:right;padding-right:2.5px;">103<i>%</i></div>
<div class="c  n" style="left:791px;top:847px;width:96px;height:17px;line-height:19px;text-align:right;padding-right:2.5px;">148<i>%</i></div>
<div class="c  n" style="left:888px;top:847px;width:96px;height:17px;line-height:19px;text-align:right;padding-right:2.5px;">139<i>%</i></div>
<div class="c  n" style="left:985px;top:847px;width:96px;height:17px;line-height:19px;text-align:right;padding-right:2.5px;">130<i>%</i></div>
<div class="c  n" style="left:1082px;top:847px;width:96px;height:17px;line-height:19px;text-align:right;padding-right:2.5px;">121<i>%</i></div>
<div class="c  n" style="left:1179px;top:847px;width:96px;height:17px;line-height:19px;text-align:right;padding-right:2.5px;">112<i>%</i></div>
<div class="c  n" style="left:1276px;top:847px;width:96px;height:17px;line-height:19px;text-align:right;padding-right:2.5px;">103<i>%</i></div>
<div class="c  n" style="left:1373px;top:847px;width:96px;height:17px;line-height:19px;text-align:right;padding-right:2.5px;">95<i>%</i></div>
<div class="c  n" style="left:1470px;top:847px;width:96px;height:17px;line-height:19px;text-align:right;padding-right:2.5px;">86<i>%</i></div>
<div class="c  n" style="left:1567px;top:847px;width:96px;height:17px;line-height:19px;text-align:right;padding-right:2.5px;">77<i>%</i></div>
<div class="c  n" style="left:1664px;top:847px;width:96px;height:17px;line-height:19px;text-align:right;padding-right:2.5px;">68<i>%</i></div>
<div class="c  n" style="left:1761px;top:847px;width:96px;height:17px;line-height:19px;text-align:right;padding-right:2.5px;">59<i>%</i></div>
<div class="c  n" style="left:279px;top:865px;width:67px;height:17px;line-height:19px;text-align:right;padding-right:2px;">&gt;=</div>
<div class="c  n" style="left:347px;top:865px;width:87px;height:17px;line-height:19px;text-align:right;padding-right:2.5px;">5<i>%</i></div>
<div class="c " style="left:435px;top:865px;width:257px;height:17px;line-height:19px;padding-left:2px;">ROI (Lợi nhuận BQ 1 năm/Tổng vốn đầu tư)</div>
<div class="c  n" style="left:693px;top:865px;width:97px;height:17px;line-height:19px;text-align:right;padding-right:2.5px;">62<i>%</i></div>
<div class="c  n" style="left:791px;top:865px;width:96px;height:17px;line-height:19px;text-align:right;padding-right:2.5px;">88<i>%</i></div>
<div class="c  n" style="left:888px;top:865px;width:96px;height:17px;line-height:19px;text-align:right;padding-right:2.5px;">83<i>%</i></div>
<div class="c  n" style="left:985px;top:865px;width:96px;height:17px;line-height:19px;text-align:right;padding-right:2.5px;">78<i>%</i></div>
<div class="c  n" style="left:1082px;top:865px;width:96px;height:17px;line-height:19px;text-align:right;padding-right:2.5px;">72<i>%</i></div>
<div class="c  n" style="left:1179px;top:865px;width:96px;height:17px;line-height:19px;text-align:right;padding-right:2.5px;">67<i>%</i></div>
<div class="c  n" style="left:1276px;top:865px;width:96px;height:17px;line-height:19px;text-align:right;padding-right:2.5px;">62<i>%</i></div>
<div class="c  n" style="left:1373px;top:865px;width:96px;height:17px;line-height:19px;text-align:right;padding-right:2.5px;">56<i>%</i></div>
<div class="c  n" style="left:1470px;top:865px;width:96px;height:17px;line-height:19px;text-align:right;padding-right:2.5px;">51<i>%</i></div>
<div class="c  n" style="left:1567px;top:865px;width:96px;height:17px;line-height:19px;text-align:right;padding-right:2.5px;">46<i>%</i></div>
<div class="c  n" style="left:1664px;top:865px;width:96px;height:17px;line-height:19px;text-align:right;padding-right:2.5px;">40<i>%</i></div>
<div class="c  n" style="left:1761px;top:865px;width:96px;height:17px;line-height:19px;text-align:right;padding-right:2.5px;">35<i>%</i></div>
<div class="c  n" style="left:279px;top:883px;width:67px;height:17px;line-height:19px;text-align:right;padding-right:2px;">&gt;=</div>
<div class="c  n" style="left:347px;top:883px;width:87px;height:17px;line-height:19px;text-align:right;padding-right:2.5px;">10<i>%</i></div>
<div class="c " style="left:435px;top:883px;width:257px;height:17px;line-height:19px;padding-left:2px;">ROS (Lợi nhuận BQ 1 năm/Doanh thu)</div>
<div class="c  n" style="left:693px;top:883px;width:97px;height:17px;line-height:19px;text-align:right;padding-right:2.5px;">22<i>%</i></div>
<div class="c  n" style="left:791px;top:883px;width:96px;height:17px;line-height:19px;text-align:right;padding-right:2.5px;">32<i>%</i></div>
<div class="c  n" style="left:888px;top:883px;width:96px;height:17px;line-height:19px;text-align:right;padding-right:2.5px;">30<i>%</i></div>
<div class="c  n" style="left:985px;top:883px;width:96px;height:17px;line-height:19px;text-align:right;padding-right:2.5px;">28<i>%</i></div>
<div class="c  n" style="left:1082px;top:883px;width:96px;height:17px;line-height:19px;text-align:right;padding-right:2.5px;">26<i>%</i></div>
<div class="c  n" style="left:1179px;top:883px;width:96px;height:17px;line-height:19px;text-align:right;padding-right:2.5px;">24<i>%</i></div>
<div class="c  n" style="left:1276px;top:883px;width:96px;height:17px;line-height:19px;text-align:right;padding-right:2.5px;">22<i>%</i></div>
<div class="c  n" style="left:1373px;top:883px;width:96px;height:17px;line-height:19px;text-align:right;padding-right:2.5px;">20<i>%</i></div>
<div class="c  n" style="left:1470px;top:883px;width:96px;height:17px;line-height:19px;text-align:right;padding-right:2.5px;">18<i>%</i></div>
<div class="c  n" style="left:1567px;top:883px;width:96px;height:17px;line-height:19px;text-align:right;padding-right:2.5px;">16<i>%</i></div>
<div class="c  n" style="left:1664px;top:883px;width:96px;height:17px;line-height:19px;text-align:right;padding-right:2.5px;">15<i>%</i></div>
<div class="c  n" style="left:1761px;top:883px;width:96px;height:17px;line-height:19px;text-align:right;padding-right:2.5px;">13<i>%</i></div>
<div class="c " style="left:29px;top:919px;width:152px;height:17px;line-height:19px;padding-left:2px;">Tỷ trọng NVL/Giá bán</div>
<div class="c  n" style="left:182px;top:919px;width:96px;height:17px;line-height:19px;text-align:right;padding-right:2.5px;">27<i>%</i></div>
<div class="c  n" style="left:279px;top:919px;width:67px;height:17px;line-height:19px;text-align:right;padding-right:2.5px;">0<i>%</i></div>
<div class="c  n" style="left:347px;top:919px;width:87px;height:17px;line-height:19px;text-align:right;padding-right:2.5px;">5<i>%</i></div>
<div class="c  n" style="left:791px;top:919px;width:96px;height:17px;line-height:19px;text-align:right;padding-right:2.5px;">2<i>%</i></div>
<div class="c  n" style="left:888px;top:919px;width:96px;height:17px;line-height:19px;text-align:right;padding-right:2.5px;">7<i>%</i></div>
<div class="c  n" style="left:985px;top:919px;width:96px;height:17px;line-height:19px;text-align:right;padding-right:2.5px;">12<i>%</i></div>
<div class="c  n" style="left:1082px;top:919px;width:96px;height:17px;line-height:19px;text-align:right;padding-right:2.5px;">17<i>%</i></div>
<div class="c  n" style="left:1179px;top:919px;width:96px;height:17px;line-height:19px;text-align:right;padding-right:2.5px;">22<i>%</i></div>
<div class="c  n" style="left:1276px;top:919px;width:96px;height:17px;line-height:19px;text-align:right;padding-right:2.5px;">27<i>%</i></div>
<div class="c  n" style="left:1373px;top:919px;width:96px;height:17px;line-height:19px;text-align:right;padding-right:2.5px;">32<i>%</i></div>
<div class="c  n" style="left:1470px;top:919px;width:96px;height:17px;line-height:19px;text-align:right;padding-right:2.5px;">37<i>%</i></div>
<div class="c  n" style="left:1567px;top:919px;width:96px;height:17px;line-height:19px;text-align:right;padding-right:2.5px;">42<i>%</i></div>
<div class="c  n" style="left:1664px;top:919px;width:96px;height:17px;line-height:19px;text-align:right;padding-right:2.5px;">47<i>%</i></div>
<div class="c  n" style="left:1761px;top:919px;width:96px;height:17px;line-height:19px;text-align:right;padding-right:2.5px;">52<i>%</i></div>
<div class="c  n" style="left:791px;top:937px;width:96px;height:17px;line-height:19px;text-align:right;padding-right:2.5px;">-25<i>%</i></div>
<div class="c  n" style="left:888px;top:937px;width:96px;height:17px;line-height:19px;text-align:right;padding-right:2.5px;">-20<i>%</i></div>
<div class="c  n" style="left:985px;top:937px;width:96px;height:17px;line-height:19px;text-align:right;padding-right:2.5px;">-15<i>%</i></div>
<div class="c  n" style="left:1082px;top:937px;width:96px;height:17px;line-height:19px;text-align:right;padding-right:2.5px;">-10<i>%</i></div>
<div class="c  n" style="left:1179px;top:937px;width:96px;height:17px;line-height:19px;text-align:right;padding-right:2.5px;">-5<i>%</i></div>
<div class="c  n" style="left:1276px;top:937px;width:96px;height:17px;line-height:19px;text-align:right;padding-right:2.5px;">0<i>%</i></div>
<div class="c  n" style="left:1373px;top:937px;width:96px;height:17px;line-height:19px;text-align:right;padding-right:2.5px;">5<i>%</i></div>
<div class="c  n" style="left:1470px;top:937px;width:96px;height:17px;line-height:19px;text-align:right;padding-right:2.5px;">10<i>%</i></div>
<div class="c  n" style="left:1567px;top:937px;width:96px;height:17px;line-height:19px;text-align:right;padding-right:2.5px;">15<i>%</i></div>
<div class="c  n" style="left:1664px;top:937px;width:96px;height:17px;line-height:19px;text-align:right;padding-right:2.5px;">20<i>%</i></div>
<div class="c  n" style="left:1761px;top:937px;width:96px;height:17px;line-height:19px;text-align:right;padding-right:2.5px;">25<i>%</i></div>
<div style="position:absolute;left:434px;top:342px;width:1424px;height:1px;background:#000"></div>
<div style="position:absolute;left:434px;top:342px;width:1px;height:163px;background:#000"></div>
<div style="position:absolute;left:1857px;top:342px;width:1px;height:163px;background:#000"></div>
<div style="position:absolute;left:434px;top:504px;width:1424px;height:1px;background:#000"></div>
<div style="position:absolute;left:434px;top:540px;width:1424px;height:1px;background:#000"></div>
<div style="position:absolute;left:434px;top:540px;width:1px;height:163px;background:#000"></div>
<div style="position:absolute;left:1857px;top:540px;width:1px;height:163px;background:#000"></div>
<div style="position:absolute;left:434px;top:702px;width:1424px;height:1px;background:#000"></div>
<div style="position:absolute;left:434px;top:738px;width:1424px;height:1px;background:#000"></div>
<div style="position:absolute;left:434px;top:738px;width:1px;height:163px;background:#000"></div>
<div style="position:absolute;left:1857px;top:738px;width:1px;height:163px;background:#000"></div>
<div style="position:absolute;left:434px;top:900px;width:1424px;height:1px;background:#000"></div>
<div style="position:absolute;left:434px;top:936px;width:1424px;height:1px;background:#000"></div>
<div style="position:absolute;left:434px;top:936px;width:1px;height:17px;background:#000"></div>
<div style="position:absolute;left:1857px;top:936px;width:1px;height:17px;background:#000"></div>
<div class="abs" style="left:886px;top:413px;width:100px;height:21px;border:2px solid #217346"></div>
<div class="abs" style="left:980px;top:428px;width:7px;height:7px;background:#217346;border-left:1px solid #fff;border-top:1px solid #fff;box-sizing:border-box"></div>
<svg class="abs" style="left:427px;top:361px" width="7" height="7" viewBox="0 0 7 7"><path d="M.8 0H7V6.200z" fill="#ff0000"/></svg>
<div class="ch" style="left:29px;top:269px;width:152px;height:17px;line-height:18px;">A</div>
<div style="position:absolute;left:181px;top:269px;width:1px;height:17px;background:#bcbcbc"></div>
<div class="ch" style="left:182px;top:269px;width:96px;height:17px;line-height:18px;">B</div>
<div style="position:absolute;left:278px;top:269px;width:1px;height:17px;background:#bcbcbc"></div>
<div class="ch" style="left:279px;top:269px;width:67px;height:17px;line-height:18px;">C</div>
<div style="position:absolute;left:346px;top:269px;width:1px;height:17px;background:#bcbcbc"></div>
<div class="ch" style="left:347px;top:269px;width:87px;height:17px;line-height:18px;">D</div>
<div style="position:absolute;left:434px;top:269px;width:1px;height:17px;background:#bcbcbc"></div>
<div class="ch" style="left:435px;top:269px;width:257px;height:17px;line-height:18px;">E</div>
<div style="position:absolute;left:692px;top:269px;width:1px;height:17px;background:#bcbcbc"></div>
<div class="ch" style="left:693px;top:269px;width:97px;height:17px;line-height:18px;">F</div>
<div style="position:absolute;left:790px;top:269px;width:1px;height:17px;background:#bcbcbc"></div>
<div class="ch" style="left:791px;top:269px;width:96px;height:17px;line-height:18px;">G</div>
<div style="position:absolute;left:887px;top:269px;width:1px;height:17px;background:#bcbcbc"></div>
<div class="ch sel" style="left:888px;top:269px;width:96px;height:17px;line-height:18px;">H</div>
<div style="position:absolute;left:984px;top:269px;width:1px;height:17px;background:#bcbcbc"></div>
<div class="ch" style="left:985px;top:269px;width:96px;height:17px;line-height:18px;">I</div>
<div style="position:absolute;left:1081px;top:269px;width:1px;height:17px;background:#bcbcbc"></div>
<div class="ch" style="left:1082px;top:269px;width:96px;height:17px;line-height:18px;">J</div>
<div style="position:absolute;left:1178px;top:269px;width:1px;height:17px;background:#bcbcbc"></div>
<div class="ch" style="left:1179px;top:269px;width:96px;height:17px;line-height:18px;">K</div>
<div style="position:absolute;left:1275px;top:269px;width:1px;height:17px;background:#bcbcbc"></div>
<div class="ch" style="left:1276px;top:269px;width:96px;height:17px;line-height:18px;">L</div>
<div style="position:absolute;left:1372px;top:269px;width:1px;height:17px;background:#bcbcbc"></div>
<div class="ch" style="left:1373px;top:269px;width:96px;height:17px;line-height:18px;">M</div>
<div style="position:absolute;left:1469px;top:269px;width:1px;height:17px;background:#bcbcbc"></div>
<div class="ch" style="left:1470px;top:269px;width:96px;height:17px;line-height:18px;">N</div>
<div style="position:absolute;left:1566px;top:269px;width:1px;height:17px;background:#bcbcbc"></div>
<div class="ch" style="left:1567px;top:269px;width:96px;height:17px;line-height:18px;">O</div>
<div style="position:absolute;left:1663px;top:269px;width:1px;height:17px;background:#bcbcbc"></div>
<div class="ch" style="left:1664px;top:269px;width:96px;height:17px;line-height:18px;">P</div>
<div style="position:absolute;left:1760px;top:269px;width:1px;height:17px;background:#bcbcbc"></div>
<div class="ch" style="left:1761px;top:269px;width:96px;height:17px;line-height:18px;">Q</div>
<div style="position:absolute;left:1857px;top:269px;width:1px;height:17px;background:#bcbcbc"></div>
<div class="ch" style="left:1858px;top:269px;width:31px;height:17px;line-height:18px;text-align:left;overflow:hidden"><span style="position:absolute;left:28.8px">R</span></div>
<div class="rh" style="left:0;top:287px;width:28px;height:37px;"><span style="position:absolute;left:0;width:28px;bottom:-1px;line-height:18px">1</span></div>
<div style="position:absolute;left:0;top:324px;width:28px;height:1px;background:#b4b4b4"></div>
<div class="rh" style="left:0;top:325px;width:28px;height:17px;line-height:19px;">2</div>
<div style="position:absolute;left:0;top:342px;width:28px;height:1px;background:#b4b4b4"></div>
<div class="rh" style="left:0;top:343px;width:28px;height:17px;line-height:19px;">3</div>
<div style="position:absolute;left:0;top:360px;width:28px;height:1px;background:#b4b4b4"></div>
<div class="rh" style="left:0;top:361px;width:28px;height:17px;line-height:19px;">4</div>
<div style="position:absolute;left:0;top:378px;width:28px;height:1px;background:#b4b4b4"></div>
<div class="rh" style="left:0;top:379px;width:28px;height:17px;line-height:19px;">5</div>
<div style="position:absolute;left:0;top:396px;width:28px;height:1px;background:#b4b4b4"></div>
<div class="rh" style="left:0;top:397px;width:28px;height:17px;line-height:19px;">6</div>
<div style="position:absolute;left:0;top:414px;width:28px;height:1px;background:#b4b4b4"></div>
<div class="rh sel" style="left:0;top:415px;width:28px;height:17px;line-height:19px;">7</div>
<div style="position:absolute;left:0;top:432px;width:28px;height:1px;background:#b4b4b4"></div>
<div class="rh" style="left:0;top:433px;width:28px;height:17px;line-height:19px;">8</div>
<div style="position:absolute;left:0;top:450px;width:28px;height:1px;background:#b4b4b4"></div>
<div class="rh" style="left:0;top:451px;width:28px;height:17px;line-height:19px;">9</div>
<div style="position:absolute;left:0;top:468px;width:28px;height:1px;background:#b4b4b4"></div>
<div class="rh" style="left:0;top:469px;width:28px;height:17px;line-height:19px;">10</div>
<div style="position:absolute;left:0;top:486px;width:28px;height:1px;background:#b4b4b4"></div>
<div class="rh" style="left:0;top:487px;width:28px;height:17px;line-height:19px;">11</div>
<div style="position:absolute;left:0;top:504px;width:28px;height:1px;background:#b4b4b4"></div>
<div class="rh" style="left:0;top:505px;width:28px;height:17px;line-height:19px;">12</div>
<div style="position:absolute;left:0;top:522px;width:28px;height:1px;background:#b4b4b4"></div>
<div class="rh" style="left:0;top:523px;width:28px;height:17px;line-height:19px;">13</div>
<div style="position:absolute;left:0;top:540px;width:28px;height:1px;background:#b4b4b4"></div>
<div class="rh" style="left:0;top:541px;width:28px;height:17px;line-height:19px;">14</div>
<div style="position:absolute;left:0;top:558px;width:28px;height:1px;background:#b4b4b4"></div>
<div class="rh" style="left:0;top:559px;width:28px;height:17px;line-height:19px;">15</div>
<div style="position:absolute;left:0;top:576px;width:28px;height:1px;background:#b4b4b4"></div>
<div class="rh" style="left:0;top:577px;width:28px;height:17px;line-height:19px;">16</div>
<div style="position:absolute;left:0;top:594px;width:28px;height:1px;background:#b4b4b4"></div>
<div class="rh" style="left:0;top:595px;width:28px;height:17px;line-height:19px;">17</div>
<div style="position:absolute;left:0;top:612px;width:28px;height:1px;background:#b4b4b4"></div>
<div class="rh" style="left:0;top:613px;width:28px;height:17px;line-height:19px;">18</div>
<div style="position:absolute;left:0;top:630px;width:28px;height:1px;background:#b4b4b4"></div>
<div class="rh" style="left:0;top:631px;width:28px;height:17px;line-height:19px;">19</div>
<div style="position:absolute;left:0;top:648px;width:28px;height:1px;background:#b4b4b4"></div>
<div class="rh" style="left:0;top:649px;width:28px;height:17px;line-height:19px;">20</div>
<div style="position:absolute;left:0;top:666px;width:28px;height:1px;background:#b4b4b4"></div>
<div class="rh" style="left:0;top:667px;width:28px;height:17px;line-height:19px;">21</div>
<div style="position:absolute;left:0;top:684px;width:28px;height:1px;background:#b4b4b4"></div>
<div class="rh" style="left:0;top:685px;width:28px;height:17px;line-height:19px;">22</div>
<div style="position:absolute;left:0;top:702px;width:28px;height:1px;background:#b4b4b4"></div>
<div class="rh" style="left:0;top:703px;width:28px;height:17px;line-height:19px;">23</div>
<div style="position:absolute;left:0;top:720px;width:28px;height:1px;background:#b4b4b4"></div>
<div class="rh" style="left:0;top:721px;width:28px;height:17px;line-height:19px;">24</div>
<div style="position:absolute;left:0;top:738px;width:28px;height:1px;background:#b4b4b4"></div>
<div class="rh" style="left:0;top:739px;width:28px;height:17px;line-height:19px;">25</div>
<div style="position:absolute;left:0;top:756px;width:28px;height:1px;background:#b4b4b4"></div>
<div class="rh" style="left:0;top:757px;width:28px;height:17px;line-height:19px;">26</div>
<div style="position:absolute;left:0;top:774px;width:28px;height:1px;background:#b4b4b4"></div>
<div class="rh" style="left:0;top:775px;width:28px;height:17px;line-height:19px;">27</div>
<div style="position:absolute;left:0;top:792px;width:28px;height:1px;background:#b4b4b4"></div>
<div class="rh" style="left:0;top:793px;width:28px;height:17px;line-height:19px;">28</div>
<div style="position:absolute;left:0;top:810px;width:28px;height:1px;background:#b4b4b4"></div>
<div class="rh" style="left:0;top:811px;width:28px;height:17px;line-height:19px;">29</div>
<div style="position:absolute;left:0;top:828px;width:28px;height:1px;background:#b4b4b4"></div>
<div class="rh" style="left:0;top:829px;width:28px;height:17px;line-height:19px;">30</div>
<div style="position:absolute;left:0;top:846px;width:28px;height:1px;background:#b4b4b4"></div>
<div class="rh" style="left:0;top:847px;width:28px;height:17px;line-height:19px;">31</div>
<div style="position:absolute;left:0;top:864px;width:28px;height:1px;background:#b4b4b4"></div>
<div class="rh" style="left:0;top:865px;width:28px;height:17px;line-height:19px;">32</div>
<div style="position:absolute;left:0;top:882px;width:28px;height:1px;background:#b4b4b4"></div>
<div class="rh" style="left:0;top:883px;width:28px;height:17px;line-height:19px;">33</div>
<div style="position:absolute;left:0;top:900px;width:28px;height:1px;background:#b4b4b4"></div>
<div class="rh" style="left:0;top:901px;width:28px;height:17px;line-height:19px;">34</div>
<div style="position:absolute;left:0;top:918px;width:28px;height:1px;background:#b4b4b4"></div>
<div class="rh" style="left:0;top:919px;width:28px;height:17px;line-height:19px;">35</div>
<div style="position:absolute;left:0;top:936px;width:28px;height:1px;background:#b4b4b4"></div>
<div class="rh" style="left:0;top:937px;width:28px;height:16px;line-height:19px;">36</div>
<div class="abs" style="left:0;top:286px;width:1889px;height:1px;background:#9b9b9b"></div>
<div class="abs" style="left:28px;top:269px;width:1px;height:685px;background:#9b9b9b"></div>
<div class="abs" style="left:0;top:324px;width:1889px;height:1px;background:#a6a6a6"></div>
<svg class="abs" style="left:14px;top:272px" width="12" height="12" viewBox="0 0 12 12"><path d="M11 1v10H1z" fill="#b8b8b8"/></svg>
<div class="abs" style="left:887px;top:269px;width:1px;height:16px;background:#d2d2d2"></div>
<div class="abs" style="left:887px;top:285px;width:98px;height:2px;background:#217346"></div>
<div class="abs" style="left:0;top:414px;width:27px;height:1px;background:#bdbdbd"></div><div class="abs" style="left:0;top:432px;width:27px;height:1px;background:#bdbdbd"></div>
<div class="abs" style="left:27px;top:414px;width:2px;height:19px;background:#217346"></div>
</div>
<div class="abs" style="left:1889px;top:269px;width:31px;height:685px;background:#e6e6e6"></div>
<div class="abs" style="left:1889px;top:287px;width:1px;height:667px;background:#ababab"></div>
<div class="abs" style="left:1892px;top:270px;width:25px;height:25px;background:#fff;border:1px solid #ababab"></div>
<svg class="abs" style="left:1898px;top:278px" width="13" height="8" viewBox="0 0 13 8"><path d="M.8 7L6.500 1.200 12.200 7z" fill="#222"/></svg>
<div class="abs" style="left:1892px;top:294px;width:25px;height:492px;background:#fff;border:1px solid #ababab"></div>
<div class="abs" style="left:1892px;top:929px;width:25px;height:24px;background:#fff;border:1px solid #ababab"></div>
<svg class="abs" style="left:1898px;top:938px" width="13" height="8" viewBox="0 0 13 8"><path d="M.8 1L6.500 6.800 12.200 1z" fill="#222"/></svg>
<div class="abs" style="left:0;top:953px;width:1920px;height:34px;background:#e6e6e6"></div>
<div class="abs" style="left:0;top:953px;width:1889px;height:1px;background:#c3c3c3"></div>
<div class="abs" style="left:0;top:987px;width:1920px;height:1px;background:#c8c8c8"></div>
<div class="abs" style="left:0;top:988px;width:1920px;height:22px;background:#f3f2f1"></div>
<svg class="abs" style="left:28px;top:963px" width="8" height="13" viewBox="0 0 8 13"><path d="M7 .8L1 6.500 7 12.200z" fill="#c6c6c6"/></svg>
<svg class="abs" style="left:63px;top:963px" width="8" height="13" viewBox="0 0 8 13"><path d="M1 .8l6 5.700-6 5.700z" fill="#c6c6c6"/></svg>
<div class="abs" style="left:118px;top:957.500px;width:1.300px;height:25px;background:#ababab"></div>
<div class="abs" style="left:279px;top:957.500px;width:1.300px;height:25px;background:#ababab"></div>
<div class="abs" style="left:389px;top:957.500px;width:1.300px;height:25px;background:#ababab"></div>
<div class="abs" style="left:571px;top:957.500px;width:1.300px;height:25px;background:#ababab"></div>
<div class="abs" style="left:794px;top:957.500px;width:1.300px;height:25px;background:#ababab"></div>
<div class="abs" style="left:912px;top:957.500px;width:1.300px;height:25px;background:#ababab"></div>
<span class="t" style="left:135.31px;top:958.07px;font-size:20px;line-height:20px;color:#444;transform:scaleX(0.9716);">Tóm tắt KQKD</span>
<span class="t" style="left:294.62px;top:958.07px;font-size:20px;line-height:20px;color:#444;transform:scaleX(0.9868);">Diện tích</span>
<span class="t" style="left:407.06px;top:958.07px;font-size:20px;line-height:20px;color:#444;transform:scaleX(0.9859);">Tổng vốn đầu tư</span>
<span class="t" style="left:590.31px;top:958.07px;font-size:20px;line-height:20px;color:#444;transform:scaleX(0.9887);">Thông số kinh doanh</span>
<span class="t" style="left:808.29px;top:958.07px;font-size:20px;line-height:20px;color:#444;transform:scaleX(1.0339);">Dòng tiền</span>
<span class="t" style="left:931.10px;top:958.07px;font-size:20px;line-height:20px;color:#444;transform:scaleX(0.9699);">Độ nhạy 2 chiều</span>
<div class="abs" style="left:1090px;top:953px;width:178px;height:31px;background:#fff;border-left:1px solid #b0b0b0;border-right:1px solid #b0b0b0;border-bottom:2px solid #217346"></div>
<div class="abs" style="left:1090px;top:982px;width:178px;height:2px;background:#217346"></div>
<span class="t" style="left:1102.45px;top:958.07px;font-size:20px;line-height:20px;color:#217346;font-weight:700;transform:scaleX(1.0082);">Độ nhạy 1 chiều</span>
<div class="abs" style="left:1307px;top:958.500px;width:22px;height:22px;border:1.300px solid #8a8a8a;border-radius:11px"></div>
<div class="abs" style="left:1312.500px;top:968.900px;width:11px;height:1.400px;background:#777"></div><div class="abs" style="left:1317.300px;top:964px;width:1.400px;height:11px;background:#777"></div>
<div class="abs" style="left:1352px;top:962.5px;width:3px;height:2.700px;background:#a6a6a6"></div>
<div class="abs" style="left:1352px;top:968.3px;width:3px;height:2.700px;background:#a6a6a6"></div>
<div class="abs" style="left:1352px;top:974.1px;width:3px;height:2.700px;background:#a6a6a6"></div>
<div class="abs" style="left:1372px;top:957px;width:25px;height:25px;background:#fff;border:1px solid #ababab"></div>
<svg class="abs" style="left:1380px;top:964px" width="8" height="12" viewBox="0 0 8 12"><path d="M7 .5L1 6l6 5.500z" fill="#222"/></svg>
<div class="abs" style="left:1396px;top:957px;width:449px;height:25px;background:#fff;border:1px solid #ababab"></div>
<div class="abs" style="left:1845px;top:957px;width:18px;height:25px;background:#f0f0f0"></div>
<div class="abs" style="left:1863px;top:957px;width:25px;height:25px;background:#fff;border:1px solid #ababab"></div>
<svg class="abs" style="left:1872px;top:964px" width="8" height="12" viewBox="0 0 8 12"><path d="M1 .5l6 5.500-6 5.500z" fill="#222"/></svg>
<span class="t" style="left:9.26px;top:996.23px;font-size:16.5px;line-height:16.5px;color:#444;transform:scaleX(0.9075);">Ready</span>
<svg class="abs" style="left:80px;top:992px" width="24" height="18" viewBox="0 0 24 18" fill="none" stroke="#444" stroke-width="1.300" stroke-linecap="round" stroke-linejoin="round"><circle cx="10.300" cy="4.800" r="2.600"/><path d="M7.600 7.300L2.700 5.800C1 5.800 1 8.700 2.700 8.700L6.800 9.900V12C6.800 15 6.200 17 5.400 19"/><path d="M7.600 7.300C9 8 11.600 8 13 7.300L18 5.800C19.600 5.800 19.600 8.700 18 8.700L14.300 9.900v.700"/><path d="M9 19L10.300 15.200 11.600 19"/><path d="M12.300 12.400L17.300 18.200 21.900 12.400"/></svg>
<span class="t" style="left:108.71px;top:996.23px;font-size:16.5px;line-height:16.5px;color:#444;transform:scaleX(0.9266);">Accessibility: Investigate</span>
<div class="abs" style="left:1475px;top:988px;width:60px;height:22px;background:#d0cfce"></div>
<svg class="abs" style="left:1494px;top:993px" width="21" height="18" viewBox="0 0 21 18" fill="none" stroke="#444" stroke-width="1.300"><path d="M1.200 18V1.200h18.800V18M1.200 7h18.800M1.200 13.100h18.800M7.500 1.200v17M13.700 1.200v17"/></svg>
<svg class="abs" style="left:1554px;top:993px" width="23" height="18" viewBox="0 0 23 18" fill="none" stroke="#444" stroke-width="1.300"><path d="M1.400 18V1.200h20V18" fill="#fff"/><path d="M6.100 4.600h10.600v11.900H6.100z" stroke-width="1.600"/><path d="M8.300 7.300h6M8.300 10.300h6M8.300 13.300h6" stroke-width="1.200"/></svg>
<svg class="abs" style="left:1614px;top:993px" width="23" height="18" viewBox="0 0 23 18" fill="none" stroke="#444" stroke-width="1.300"><path d="M1.200 18V1.200h20V18" fill="#fff"/><path d="M1.200 11.300h12.600V1.200M7.200 1.200v10"/></svg>
<div class="abs" style="left:1662.500px;top:1002.800px;width:12px;height:1.300px;background:#666"></div>
<div class="abs" style="left:1683px;top:1002.700px;width:148px;height:2px;background:#4a4a4a"></div>
<div class="abs" style="left:1726.300px;top:995px;width:7.500px;height:16px;background:#444"></div>
<div class="abs" style="left:1756.300px;top:999px;width:1.500px;height:9px;background:#444"></div>
<div class="abs" style="left:1839px;top:1002.800px;width:11.500px;height:1.300px;background:#555"></div><div class="abs" style="left:1844.200px;top:997.500px;width:1.300px;height:12px;background:#555"></div>
<span class="t" style="left:1868.72px;top:996.23px;font-size:16.5px;line-height:16.5px;color:#444;transform:scaleX(0.9482);">65%</span>
</div></body></html>
